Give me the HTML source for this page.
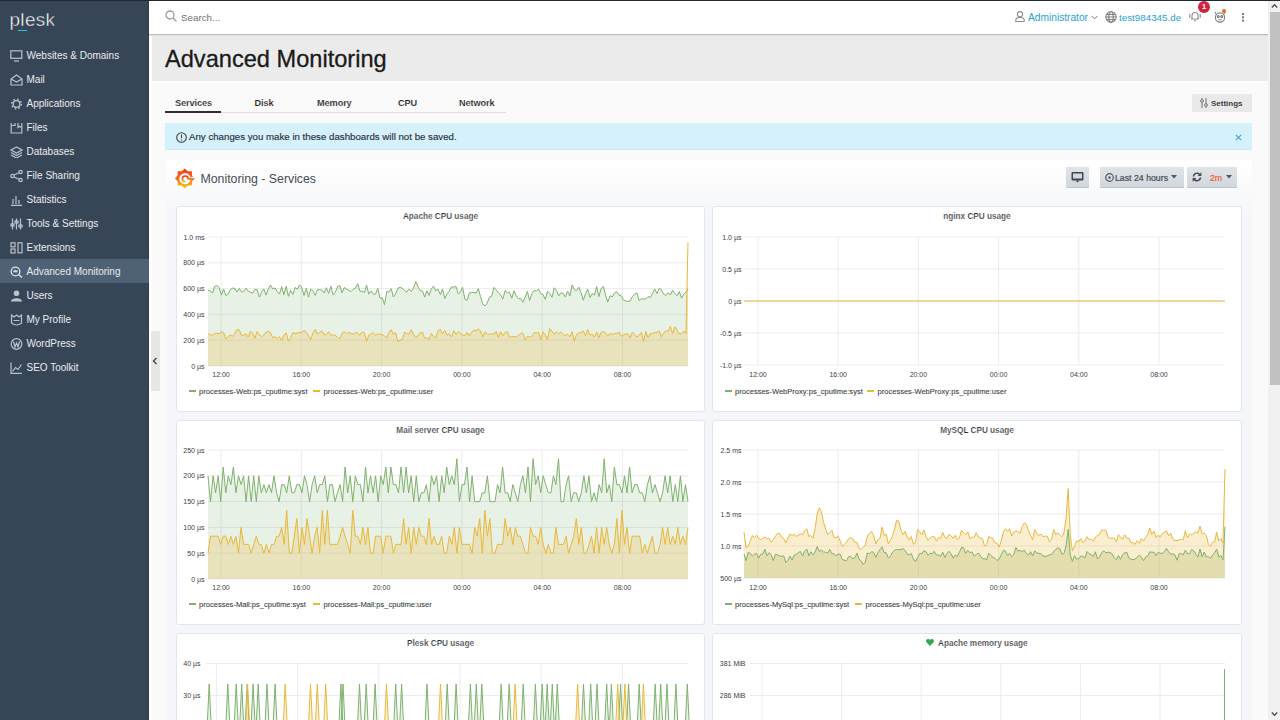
<!DOCTYPE html>
<html><head><meta charset="utf-8">
<style>
*{box-sizing:border-box;margin:0;padding:0}
html,body{width:1280px;height:720px;overflow:hidden;background:#fafafa;font-family:"Liberation Sans",sans-serif}
.a{position:absolute}
#topline{left:0;top:0;width:1280px;height:1px;background:#222831}
#side{left:0;top:1px;width:149px;height:719px;background:#374656;border-right:1px solid #2e3b49}
#logo{left:9.5px;top:8.5px;font-size:19px;color:#fff;letter-spacing:0.3px;-webkit-text-stroke:0.45px #374656}
#logo-u{left:18px;top:30px;width:9px;height:1.2px;background:#28c4d6}
.nav{position:absolute;left:0;width:149px;height:24px;color:#e9ecef;font-size:10px}
.nav span{position:absolute;left:26.5px;top:7px;white-space:nowrap}
.nav svg{position:absolute;left:10px;top:6.5px}
.nav.act{background:#4f6175}
#hdr{left:149px;top:1px;width:1119px;height:34px;background:#fff;border-bottom:1px solid #bdbdbd}
#hdrsh{left:149px;top:35px;width:1119px;height:1px;background:#e0e0e0}
#search{left:181px;top:12px;font-size:9.8px;color:#737373}
#titleband{left:151px;top:35px;width:1117px;height:48px;background:#ebebeb;border-bottom:2px solid #fdfdfd}
#title{left:165px;top:46px;font-size:23.6px;color:#1a1a1a;white-space:nowrap;-webkit-text-stroke:0.3px #1a1a1a}
.tab{position:absolute;top:97.5px;font-size:9.2px;font-weight:bold;color:#1f1f1f;-webkit-text-stroke:0.12px #fafafa;white-space:nowrap;letter-spacing:-0.1px}
#tabline{left:165px;top:111.5px;width:341px;height:1px;background:#dedede}
#tabul{left:165px;top:111px;width:56px;height:2px;background:#303030}
#setbtn{left:1192px;top:94px;width:60px;height:18px;background:#e9e9e9}
#setbtn span{position:absolute;left:19px;top:5px;font-size:8px;font-weight:bold;color:#1e1e1e;-webkit-text-stroke:0.12px #e9e9e9}
#alert{left:165px;top:123px;width:1087px;height:27px;background:#d5f1fc;border-bottom:1px solid #cde9f3}
#alert span{position:absolute;left:24px;top:8px;font-size:9.7px;color:#2a3035;white-space:nowrap;-webkit-text-stroke:0.15px #2a3035}
#scroll{left:1268px;top:1px;width:12px;height:719px;background:#f1f1f1}
#thumb{left:1269.5px;top:12px;width:10.5px;height:373px;background:#c1c1c1}
#gf{left:166px;top:160px;width:1086px;height:560px;background:linear-gradient(#ffffff 0px,#fcfcfd 20px,#f7f8fb 42px,#f5f6fa 60px,#f5f6fa 100%)}
#gftitle{left:200.5px;top:171.5px;font-size:12.3px;color:#464c54;white-space:nowrap}
.gbtn{position:absolute;top:167px;height:21px;background:linear-gradient(#e0e4e9,#d2d7dd);border-bottom:1.5px solid #bcc2c9;border-radius:1px}
.panel{position:absolute;background:#fff;border:1px solid #e3e6ed;border-radius:3px}
.ptitle{position:absolute;font-size:8.2px;font-weight:bold;color:#2f3338;-webkit-text-stroke:0.18px #fff;white-space:nowrap;text-align:center}
.leg{position:absolute;font-size:7.55px;color:#3a3f45;white-space:nowrap;-webkit-text-stroke:0.1px #3a3f45}
.leg i{display:inline-block;width:7px;height:2px;vertical-align:middle;margin-right:3.5px;position:relative;top:-1px}
svg text.ax{font-family:"Liberation Sans",sans-serif;font-size:7px;fill:#3c4148}
#collapse{left:151px;top:331px;width:9px;height:60px;background:#e6e6e6}
</style></head><body>
<div class="a" id="topline"></div>
<div class="a" id="side"></div>
<div class="a" id="logo">plesk</div>
<div class="a" id="logo-u"></div>

<div class="nav" style="top:43px"><svg width="13" height="12" viewBox="0 0 13 12" fill="none" stroke="#b9c2cb" stroke-width="1.2"><rect x="0.8" y="0.8" width="11" height="7.5"/><line x1="4" y1="11" x2="9" y2="11"/></svg><span>Websites &amp; Domains</span></div>
<div class="nav" style="top:67px"><svg width="13" height="12" viewBox="0 0 13 12" fill="none" stroke="#b9c2cb" stroke-width="1.2"><path d="M1 5 L6.5 1 L12 5 V11 H1 Z M1 5 L6.5 8 L12 5"/></svg><span>Mail</span></div>
<div class="nav" style="top:91px"><svg width="13" height="12" viewBox="0 0 13 12" fill="none" stroke="#b9c2cb"><circle cx="6.5" cy="6" r="4.9" stroke-width="1.4" stroke-dasharray="1.6 2.25"/><circle cx="6.5" cy="6" r="3.4" stroke-width="1.4"/></svg><span>Applications</span></div>
<div class="nav" style="top:115px"><svg width="13" height="12" viewBox="0 0 13 12" fill="none" stroke="#b9c2cb" stroke-width="1.2"><path d="M1.2 1 V11 H11.8 V1 M1.2 3.5 H5 V1 M8 1 V5.5 L9.5 4.3 L11 5.5"/></svg><span>Files</span></div>
<div class="nav" style="top:139px"><svg width="13" height="12" viewBox="0 0 13 12" fill="none" stroke="#b9c2cb" stroke-width="1.2"><path d="M1 4 L6.5 1 L12 4 L6.5 7 Z M1 6.5 L6.5 9.5 L12 6.5 M1 9 L6.5 12 L12 9"/></svg><span>Databases</span></div>
<div class="nav" style="top:163px"><svg width="13" height="12" viewBox="0 0 13 12" fill="none" stroke="#b9c2cb" stroke-width="1.2"><circle cx="2.5" cy="6" r="1.7"/><circle cx="10.5" cy="2" r="1.7"/><circle cx="10.5" cy="10" r="1.7"/><path d="M4 5 L9 2.8 M4 7 L9 9.2"/></svg><span>File Sharing</span></div>
<div class="nav" style="top:187px"><svg width="13" height="12" viewBox="0 0 13 12" fill="none" stroke="#b9c2cb" stroke-width="1.2"><path d="M1 11.3 H12 M3 10 V5 M6 10 V2 M9 10 V6"/></svg><span>Statistics</span></div>
<div class="nav" style="top:211px"><svg width="13" height="12" viewBox="0 0 13 12" fill="none" stroke="#b9c2cb" stroke-width="1.2"><path d="M2.5 0.5 V11.5 M6.5 0.5 V11.5 M10.5 0.5 V11.5"/><rect x="1" y="6" width="3" height="2"/><rect x="5" y="3" width="3" height="2"/><rect x="9" y="7" width="3" height="2"/></svg><span>Tools &amp; Settings</span></div>
<div class="nav" style="top:235px"><svg width="13" height="12" viewBox="0 0 13 12" fill="none" stroke="#b9c2cb" stroke-width="1.2"><rect x="1" y="0.8" width="4" height="4"/><rect x="1" y="7" width="4" height="4"/><rect x="8" y="0.8" width="4" height="10"/></svg><span>Extensions</span></div>
<div class="nav act" style="top:259px"><svg width="13" height="12" viewBox="0 0 13 12" fill="none" stroke="#dfe5ea" stroke-width="1.3"><circle cx="5.5" cy="5.5" r="4.3"/><path d="M8.6 8.6 L12 11.6 M3.5 6 L5 4.5 L6 6 L7.5 4.5"/></svg><span>Advanced Monitoring</span></div>
<div class="nav" style="top:283px"><svg width="13" height="12" viewBox="0 0 13 12" fill="#b9c2cb"><circle cx="6.5" cy="3.3" r="2.8"/><path d="M1 11.5 C1 7 12 7 12 11.5 Z"/></svg><span>Users</span></div>
<div class="nav" style="top:307px"><svg width="13" height="12" viewBox="0 0 13 12" fill="none" stroke="#b9c2cb" stroke-width="1.2"><path d="M1.5 1 L4 3 L6.5 1 L9 3 L11.5 1 V9 Q6.5 13 1.5 9 Z M3.5 6.5 H9.5"/></svg><span>My Profile</span></div>
<div class="nav" style="top:331px"><svg width="13" height="12" viewBox="0 0 13 12" fill="none" stroke="#b9c2cb" stroke-width="1.2"><circle cx="6.5" cy="6" r="5.3"/><path d="M3.5 3.5 L5 9 L6.5 5 L8 9 L9.5 3.5"/></svg><span>WordPress</span></div>
<div class="nav" style="top:355px"><svg width="13" height="12" viewBox="0 0 13 12" fill="none" stroke="#b9c2cb" stroke-width="1.2"><path d="M1 0.5 V11.3 H12 M2.5 9.5 L5.5 5.5 L8 7.5 L11.5 2.5"/></svg><span>SEO Toolkit</span></div>

<div class="a" id="hdr"></div>
<svg class="a" style="left:165px;top:10px" width="13" height="13" viewBox="0 0 13 13" fill="none" stroke="#9a9a9a" stroke-width="1.3"><circle cx="5" cy="5" r="4"/><path d="M8 8 L11.5 11.5"/></svg>
<div class="a" id="search">Search...</div>
<svg class="a" style="left:1015px;top:11px" width="10" height="11" viewBox="0 0 10 11" fill="none" stroke="#8d8d8d" stroke-width="1.1"><circle cx="5" cy="3.2" r="2.6"/><path d="M0.8 10.5 V9 Q0.8 6.5 5 6.5 Q9.2 6.5 9.2 9 V10.5 Z"/></svg>
<div class="a" style="left:1028px;top:12px;font-size:10.2px;color:#28a0d2;white-space:nowrap">Administrator</div>
<svg class="a" style="left:1091px;top:15px" width="7" height="5" viewBox="0 0 7 5" fill="none" stroke="#777" stroke-width="1"><path d="M0.5 0.8 L3.5 3.8 L6.5 0.8"/></svg>
<svg class="a" style="left:1105px;top:11px" width="12" height="12" viewBox="0 0 12 12" fill="none" stroke="#7d7d7d" stroke-width="1.1"><circle cx="6" cy="6" r="5.2"/><ellipse cx="6" cy="6" rx="2.2" ry="5.2"/><path d="M1 6 H11 M1.8 3.5 H10.2 M1.8 8.5 H10.2"/></svg>
<div class="a" style="left:1119px;top:12px;font-size:9.8px;color:#28a0d2;white-space:nowrap">test984345.de</div>
<svg class="a" style="left:1189px;top:11px" width="12" height="11" viewBox="0 0 12 11" fill="none" stroke="#8d8d8d" stroke-width="1.1"><path d="M3 8 V5 Q3 1.5 6 1.5 Q9 1.5 9 5 V8 H2 H10 M5 9.8 H7 M1 3 Q0.5 5 1 7 M11 3 Q11.5 5 11 7"/></svg>
<div class="a" style="left:1198px;top:1px;width:12px;height:12px;border-radius:6px;background:#d02340;color:#fff;font-size:7.5px;font-weight:bold;text-align:center;line-height:12px">1</div>
<svg class="a" style="left:1214px;top:11px" width="12" height="12" viewBox="0 0 12 12" fill="none" stroke="#7d7d7d" stroke-width="1.1"><circle cx="6" cy="6.5" r="4.6"/><circle cx="4.3" cy="5.6" r="1"/><circle cx="7.7" cy="5.6" r="1"/><path d="M2 3 L1 1 M10 3 L11 1 M4.5 8.8 H7.5"/></svg>
<div class="a" style="left:1222px;top:9px;width:4px;height:4px;border-radius:2px;background:#f26322"></div>
<div class="a" style="left:1242px;top:13px;width:1.7px;height:1.7px;background:#7a7a7a;box-shadow:0 3.3px 0 #7a7a7a,0 6.6px 0 #7a7a7a"></div>

<div class="a" id="titleband"></div>
<div class="a" style="left:149px;top:35px;width:2.5px;height:685px;background:#fff"></div>
<div class="a" id="hdrsh"></div>
<div class="a" id="title">Advanced Monitoring</div>

<div class="a" id="tabline"></div>
<div class="a" id="tabul"></div>
<div class="tab" style="left:175px">Services</div>
<div class="tab" style="left:254.5px">Disk</div>
<div class="tab" style="left:317px">Memory</div>
<div class="tab" style="left:398px">CPU</div>
<div class="tab" style="left:459px">Network</div>

<div class="a" id="setbtn"><svg style="position:absolute;left:8px;top:4px" width="8" height="10" viewBox="0 0 8 10" fill="none" stroke="#777" stroke-width="1"><path d="M2 0 V10 M6 0 V10"/><circle cx="2" cy="3" r="1.4" fill="#e9e9e9"/><circle cx="6" cy="7" r="1.4" fill="#e9e9e9"/></svg><span>Settings</span></div>

<div class="a" id="alert"><svg style="position:absolute;left:11px;top:9px" width="11" height="11" viewBox="0 0 11 11" fill="none" stroke="#444" stroke-width="1.1"><circle cx="5.5" cy="5.5" r="4.8"/><path d="M5.5 2.6 V6.2 M5.5 7.4 V8.4"/></svg><span>Any changes you make in these dashboards will not be saved.</span>
<svg style="position:absolute;left:1070px;top:11px" width="7" height="7" viewBox="0 0 7 7" stroke="#3aa6d6" stroke-width="1.1"><path d="M0.8 0.8 L6.2 6.2 M6.2 0.8 L0.8 6.2"/></svg></div>

<div class="a" id="collapse"><svg style="position:absolute;left:0.5px;top:25.5px" width="6" height="8" viewBox="0 0 6 8" fill="none" stroke="#3a3a3a" stroke-width="1.2"><path d="M4.5 1 L1.5 4 L4.5 7"/></svg></div>

<div class="a" id="gf"></div>
<svg class="a" style="left:174.5px;top:167.5px" width="20" height="21" viewBox="0 0 20 21">
<defs><linearGradient id="gg" x1="0" y1="0" x2="0" y2="1"><stop offset="0" stop-color="#f2301c"/><stop offset="0.5" stop-color="#f6701a"/><stop offset="1" stop-color="#f8c812"/></linearGradient></defs>
<path fill="url(#gg)" d="M9.80,0.40 L12.78,3.19 L16.87,3.33 L17.01,7.42 L19.80,10.40 L17.01,13.38 L16.87,17.47 L12.78,17.61 L9.80,20.40 L6.82,17.61 L2.73,17.47 L2.59,13.38 L-0.20,10.40 L2.59,7.42 L2.73,3.33 L6.82,3.19 Z"/>
<circle cx="10" cy="10.7" r="5.6" fill="#fdfdfe"/>
<path fill="none" stroke="url(#gg)" stroke-width="1.7" d="M10.3 13.8 A2.9 2.9 0 1 1 13.2 10.9 L16 10.9"/>
<path fill="#fdfdfe" d="M15.2 9.6 L20 8 L20 10.2 L15.6 10.1 Z"/>
</svg>
<div class="a" id="gftitle">Monitoring - Services</div>

<div class="gbtn" style="left:1066px;width:23px"><svg style="position:absolute;left:5px;top:5px" width="13" height="11" viewBox="0 0 13 11" fill="#41464d"><rect x="0.5" y="0" width="12" height="8.5" rx="1"/><rect x="2" y="1.5" width="9" height="5" fill="#d3d8de"/><path d="M4.5 8.5 H8.5 L6.5 10.5 Z"/></svg></div>
<div class="gbtn" style="left:1100px;width:84px"><svg style="position:absolute;left:5px;top:5.5px" width="9" height="9" viewBox="0 0 9 9" fill="none" stroke="#52575e" stroke-width="1.2"><circle cx="4.5" cy="4.5" r="3.8"/><circle cx="4.5" cy="4.5" r="0.6" fill="#52575e"/></svg><span style="position:absolute;left:15px;top:5.5px;font-size:8.75px;color:#464b52;white-space:nowrap;-webkit-text-stroke:0.2px #464b52">Last 24 hours</span><svg style="position:absolute;left:71px;top:8px" width="6" height="4" viewBox="0 0 6 4" fill="#52575e"><path d="M0 0 H6 L3 3.5 Z"/></svg></div>
<div class="gbtn" style="left:1187px;width:50px"><svg style="position:absolute;left:5px;top:5px" width="10" height="10" viewBox="0 0 10 10" fill="none" stroke="#41464d" stroke-width="1.5"><path d="M1.5 4.5 A3.5 3.5 0 0 1 8 3 M8.5 5.5 A3.5 3.5 0 0 1 2 7"/><path d="M8.8 0.8 V3.5 H6.2 M1.2 9.2 V6.5 H3.8" stroke-width="1.2"/></svg><span style="position:absolute;left:23px;top:5.5px;font-size:8.75px;color:#f05a28;-webkit-text-stroke:0.15px #f05a28">2m</span><svg style="position:absolute;left:39px;top:8px" width="6" height="4" viewBox="0 0 6 4" fill="#52575e"><path d="M0 0 H6 L3 3.5 Z"/></svg></div>

<div class="panel" style="left:176px;top:206px;width:529px;height:206px"></div>
<div class="panel" style="left:712px;top:206px;width:530px;height:206px"></div>
<div class="panel" style="left:176px;top:420px;width:529px;height:205px"></div>
<div class="panel" style="left:712px;top:420px;width:530px;height:205px"></div>
<div class="panel" style="left:176px;top:633px;width:529px;height:120px"></div>
<div class="panel" style="left:712px;top:633px;width:530px;height:120px"></div>

<div class="ptitle" style="left:176px;width:529px;top:212px">Apache CPU usage</div>
<div class="ptitle" style="left:712px;width:530px;top:212px">nginx CPU usage</div>
<div class="ptitle" style="left:176px;width:529px;top:426px">Mail server CPU usage</div>
<div class="ptitle" style="left:712px;width:530px;top:426px">MySQL CPU usage</div>
<div class="ptitle" style="left:176px;width:529px;top:639px">Plesk CPU usage</div>
<svg class="a" style="left:926px;top:639px" width="8" height="7" viewBox="0 0 8 7" fill="#37a84a"><path d="M4 7 L0.6 3.4 C-0.6 2 0.3 0 2 0 C3 0 3.6 0.6 4 1.2 C4.4 0.6 5 0 6 0 C7.7 0 8.6 2 7.4 3.4 Z"/></svg><div class="ptitle" style="left:938px;top:639px;text-align:left">Apache memory usage</div>

<svg class="a" style="left:0;top:0" width="1280" height="720" viewBox="0 0 1280 720">
<line x1="208.0" y1="237.0" x2="688.0" y2="237.0" stroke="#ececec" stroke-width="1"/>
<line x1="208.0" y1="262.8" x2="688.0" y2="262.8" stroke="#ececec" stroke-width="1"/>
<line x1="208.0" y1="288.6" x2="688.0" y2="288.6" stroke="#ececec" stroke-width="1"/>
<line x1="208.0" y1="314.4" x2="688.0" y2="314.4" stroke="#ececec" stroke-width="1"/>
<line x1="208.0" y1="340.2" x2="688.0" y2="340.2" stroke="#ececec" stroke-width="1"/>
<line x1="208.0" y1="366.0" x2="688.0" y2="366.0" stroke="#ececec" stroke-width="1"/>
<line x1="221.0" y1="237.0" x2="221.0" y2="366.0" stroke="#ececec" stroke-width="1"/>
<line x1="301.3" y1="237.0" x2="301.3" y2="366.0" stroke="#ececec" stroke-width="1"/>
<line x1="381.6" y1="237.0" x2="381.6" y2="366.0" stroke="#ececec" stroke-width="1"/>
<line x1="461.9" y1="237.0" x2="461.9" y2="366.0" stroke="#ececec" stroke-width="1"/>
<line x1="542.2" y1="237.0" x2="542.2" y2="366.0" stroke="#ececec" stroke-width="1"/>
<line x1="622.5" y1="237.0" x2="622.5" y2="366.0" stroke="#ececec" stroke-width="1"/>
<text x="204.5" y="239.5" text-anchor="end" class="ax">1.0 ms</text>
<text x="204.5" y="265.3" text-anchor="end" class="ax">800 µs</text>
<text x="204.5" y="291.1" text-anchor="end" class="ax">600 µs</text>
<text x="204.5" y="316.9" text-anchor="end" class="ax">400 µs</text>
<text x="204.5" y="342.7" text-anchor="end" class="ax">200 µs</text>
<text x="204.5" y="368.5" text-anchor="end" class="ax">0 µs</text>
<text x="221.0" y="377.0" text-anchor="middle" class="ax">12:00</text>
<text x="301.3" y="377.0" text-anchor="middle" class="ax">16:00</text>
<text x="381.6" y="377.0" text-anchor="middle" class="ax">20:00</text>
<text x="461.9" y="377.0" text-anchor="middle" class="ax">00:00</text>
<text x="542.2" y="377.0" text-anchor="middle" class="ax">04:00</text>
<text x="622.5" y="377.0" text-anchor="middle" class="ax">08:00</text>
<path d="M208.0,290.5 L210.2,290.6 L212.5,293.1 L214.7,286.5 L216.9,285.5 L219.2,287.5 L221.4,295.1 L223.6,289.1 L225.9,295.6 L228.1,294.1 L230.3,289.7 L232.6,288.0 L234.8,288.5 L237.0,292.0 L239.3,288.4 L241.5,291.8 L243.7,291.6 L246.0,288.2 L248.2,291.2 L250.4,292.1 L252.7,293.3 L254.9,289.3 L257.1,289.8 L259.4,297.1 L261.6,292.0 L263.8,288.9 L266.1,295.1 L268.3,288.9 L270.5,285.0 L272.8,288.9 L275.0,287.9 L277.2,291.5 L279.5,294.0 L281.7,286.7 L283.9,294.8 L286.2,286.3 L288.4,296.3 L290.6,290.4 L292.9,294.4 L295.1,287.5 L297.3,289.1 L299.6,284.8 L301.8,287.7 L304.0,295.5 L306.3,288.3 L308.5,297.1 L310.7,289.1 L313.0,291.1 L315.2,295.4 L317.4,289.8 L319.7,289.5 L321.9,290.2 L324.1,293.0 L326.4,287.7 L328.6,293.4 L330.9,286.3 L333.1,294.9 L335.3,292.3 L337.6,286.4 L339.8,285.7 L342.0,292.7 L344.3,287.5 L346.5,289.2 L348.7,290.2 L351.0,291.6 L353.2,289.3 L355.4,288.2 L357.7,283.6 L359.9,291.2 L362.1,291.3 L364.4,292.5 L366.6,285.2 L368.8,294.2 L371.1,291.0 L373.3,294.3 L375.5,294.1 L377.8,288.3 L380.0,298.1 L382.2,297.8 L384.5,304.6 L386.7,291.5 L388.9,292.0 L391.2,288.7 L393.4,297.0 L395.6,293.9 L397.9,288.3 L400.1,287.2 L402.3,288.4 L404.6,290.5 L406.8,292.0 L409.0,289.1 L411.3,291.6 L413.5,288.1 L415.7,281.6 L418.0,286.6 L420.2,290.4 L422.4,290.9 L424.7,297.1 L426.9,290.9 L429.1,295.4 L431.4,288.3 L433.6,286.2 L435.8,290.9 L438.1,289.2 L440.3,294.6 L442.5,289.2 L444.8,298.5 L447.0,293.8 L449.2,291.2 L451.5,286.8 L453.7,287.2 L455.9,286.2 L458.2,293.7 L460.4,292.2 L462.6,287.4 L464.9,299.4 L467.1,300.3 L469.3,292.9 L471.6,292.6 L473.8,292.3 L476.0,293.1 L478.3,288.6 L480.5,296.6 L482.7,303.8 L485.0,306.0 L487.2,303.0 L489.4,297.2 L491.7,296.3 L493.9,287.4 L496.1,289.8 L498.4,292.9 L500.6,294.7 L502.8,298.9 L505.1,290.5 L507.3,292.4 L509.5,292.2 L511.8,298.2 L514.0,290.8 L516.2,295.7 L518.5,298.8 L520.7,298.3 L522.9,302.3 L525.2,297.1 L527.4,291.4 L529.6,300.5 L531.9,293.6 L534.1,290.6 L536.3,290.8 L538.6,289.3 L540.8,293.7 L543.0,294.5 L545.3,299.4 L547.5,291.5 L549.7,293.4 L552.0,297.3 L554.2,287.8 L556.4,290.3 L558.7,295.9 L560.9,292.9 L563.1,293.5 L565.4,297.0 L567.6,291.1 L569.9,296.0 L572.1,284.8 L574.3,289.6 L576.6,290.6 L578.8,287.2 L581.0,292.6 L583.3,300.2 L585.5,293.9 L587.7,289.1 L590.0,297.7 L592.2,293.5 L594.4,295.1 L596.7,286.7 L598.9,296.6 L601.1,288.5 L603.4,286.5 L605.6,295.5 L607.8,301.8 L610.1,295.7 L612.3,296.9 L614.5,293.0 L616.8,291.7 L619.0,295.2 L621.2,295.7 L623.5,300.0 L625.7,301.0 L627.9,301.4 L630.2,300.7 L632.4,296.6 L634.6,294.1 L636.9,292.9 L639.1,300.6 L641.3,298.8 L643.6,299.0 L645.8,298.9 L648.0,296.6 L650.3,297.5 L652.5,293.3 L654.7,289.0 L657.0,293.5 L659.2,288.5 L661.4,289.7 L663.7,294.1 L665.9,295.5 L668.1,292.7 L670.4,295.0 L672.6,290.4 L674.8,293.5 L677.1,295.6 L679.3,291.5 L681.5,298.1 L683.8,294.2 L686.0,291.9 L688.0,288.6 L688.0,366.0 L208.0,366.0 Z" fill="rgba(126,178,109,0.18)" stroke="none"/>
<path d="M208.0,332.9 L210.2,335.0 L212.5,335.1 L214.7,333.3 L216.9,333.5 L219.2,333.7 L221.4,331.8 L223.6,332.5 L225.9,339.0 L228.1,336.6 L230.3,335.0 L232.6,336.3 L234.8,333.7 L237.0,329.4 L239.3,330.0 L241.5,335.6 L243.7,334.9 L246.0,333.8 L248.2,337.0 L250.4,331.4 L252.7,333.1 L254.9,338.4 L257.1,331.5 L259.4,334.7 L261.6,336.8 L263.8,335.0 L266.1,332.2 L268.3,331.3 L270.5,332.7 L272.8,337.8 L275.0,336.8 L277.2,338.5 L279.5,336.7 L281.7,340.6 L283.9,335.0 L286.2,332.9 L288.4,341.2 L290.6,337.9 L292.9,332.3 L295.1,333.5 L297.3,333.0 L299.6,332.4 L301.8,332.4 L304.0,330.4 L306.3,332.1 L308.5,335.7 L310.7,339.8 L313.0,332.6 L315.2,329.5 L317.4,333.8 L319.7,332.4 L321.9,330.8 L324.1,334.8 L326.4,334.4 L328.6,331.7 L330.9,335.1 L333.1,334.9 L335.3,335.3 L337.6,337.5 L339.8,338.6 L342.0,333.4 L344.3,331.8 L346.5,333.5 L348.7,332.6 L351.0,333.2 L353.2,334.2 L355.4,332.7 L357.7,333.1 L359.9,335.2 L362.1,331.9 L364.4,332.8 L366.6,341.4 L368.8,335.1 L371.1,333.9 L373.3,332.4 L375.5,335.5 L377.8,333.6 L380.0,334.5 L382.2,334.6 L384.5,335.8 L386.7,338.0 L388.9,332.4 L391.2,329.8 L393.4,334.5 L395.6,332.6 L397.9,341.7 L400.1,340.0 L402.3,339.7 L404.6,332.1 L406.8,333.4 L409.0,333.8 L411.3,329.9 L413.5,334.3 L415.7,337.6 L418.0,335.8 L420.2,332.7 L422.4,332.2 L424.7,338.2 L426.9,337.9 L429.1,339.3 L431.4,333.3 L433.6,336.8 L435.8,338.1 L438.1,330.6 L440.3,329.2 L442.5,333.9 L444.8,330.3 L447.0,335.3 L449.2,333.4 L451.5,337.1 L453.7,330.7 L455.9,334.2 L458.2,331.5 L460.4,333.5 L462.6,335.0 L464.9,335.6 L467.1,332.3 L469.3,335.7 L471.6,332.3 L473.8,330.2 L476.0,330.6 L478.3,329.1 L480.5,330.8 L482.7,336.8 L485.0,331.8 L487.2,333.9 L489.4,334.4 L491.7,333.7 L493.9,334.1 L496.1,331.5 L498.4,337.4 L500.6,331.9 L502.8,335.6 L505.1,332.4 L507.3,331.7 L509.5,337.2 L511.8,336.8 L514.0,336.5 L516.2,337.0 L518.5,335.2 L520.7,333.5 L522.9,333.3 L525.2,339.7 L527.4,336.2 L529.6,337.2 L531.9,336.3 L534.1,332.6 L536.3,333.1 L538.6,332.3 L540.8,339.9 L543.0,331.8 L545.3,335.2 L547.5,339.5 L549.7,328.5 L552.0,331.3 L554.2,334.1 L556.4,331.8 L558.7,334.1 L560.9,332.0 L563.1,334.5 L565.4,335.4 L567.6,334.3 L569.9,336.8 L572.1,331.6 L574.3,341.2 L576.6,334.4 L578.8,333.2 L581.0,332.7 L583.3,331.1 L585.5,335.7 L587.7,329.5 L590.0,335.3 L592.2,334.1 L594.4,337.1 L596.7,332.0 L598.9,337.7 L601.1,332.3 L603.4,331.7 L605.6,333.1 L607.8,336.3 L610.1,333.3 L612.3,334.5 L614.5,333.4 L616.8,333.6 L619.0,332.0 L621.2,336.3 L623.5,334.8 L625.7,334.0 L627.9,333.8 L630.2,337.9 L632.4,332.1 L634.6,334.5 L636.9,337.2 L639.1,334.8 L641.3,332.4 L643.6,341.5 L645.8,331.3 L648.0,337.7 L650.3,333.6 L652.5,333.7 L654.7,332.3 L657.0,332.3 L659.2,331.2 L661.4,336.8 L663.7,332.8 L665.9,331.0 L668.1,331.1 L670.4,326.5 L672.6,333.4 L674.8,326.8 L677.1,330.4 L679.3,333.6 L681.5,333.7 L683.8,331.0 L686.0,333.7 L688.0,242.2 L688.0,366.0 L208.0,366.0 Z" fill="rgba(234,184,57,0.24)" stroke="none"/>
<path d="M208.0,290.5 L210.2,290.6 L212.5,293.1 L214.7,286.5 L216.9,285.5 L219.2,287.5 L221.4,295.1 L223.6,289.1 L225.9,295.6 L228.1,294.1 L230.3,289.7 L232.6,288.0 L234.8,288.5 L237.0,292.0 L239.3,288.4 L241.5,291.8 L243.7,291.6 L246.0,288.2 L248.2,291.2 L250.4,292.1 L252.7,293.3 L254.9,289.3 L257.1,289.8 L259.4,297.1 L261.6,292.0 L263.8,288.9 L266.1,295.1 L268.3,288.9 L270.5,285.0 L272.8,288.9 L275.0,287.9 L277.2,291.5 L279.5,294.0 L281.7,286.7 L283.9,294.8 L286.2,286.3 L288.4,296.3 L290.6,290.4 L292.9,294.4 L295.1,287.5 L297.3,289.1 L299.6,284.8 L301.8,287.7 L304.0,295.5 L306.3,288.3 L308.5,297.1 L310.7,289.1 L313.0,291.1 L315.2,295.4 L317.4,289.8 L319.7,289.5 L321.9,290.2 L324.1,293.0 L326.4,287.7 L328.6,293.4 L330.9,286.3 L333.1,294.9 L335.3,292.3 L337.6,286.4 L339.8,285.7 L342.0,292.7 L344.3,287.5 L346.5,289.2 L348.7,290.2 L351.0,291.6 L353.2,289.3 L355.4,288.2 L357.7,283.6 L359.9,291.2 L362.1,291.3 L364.4,292.5 L366.6,285.2 L368.8,294.2 L371.1,291.0 L373.3,294.3 L375.5,294.1 L377.8,288.3 L380.0,298.1 L382.2,297.8 L384.5,304.6 L386.7,291.5 L388.9,292.0 L391.2,288.7 L393.4,297.0 L395.6,293.9 L397.9,288.3 L400.1,287.2 L402.3,288.4 L404.6,290.5 L406.8,292.0 L409.0,289.1 L411.3,291.6 L413.5,288.1 L415.7,281.6 L418.0,286.6 L420.2,290.4 L422.4,290.9 L424.7,297.1 L426.9,290.9 L429.1,295.4 L431.4,288.3 L433.6,286.2 L435.8,290.9 L438.1,289.2 L440.3,294.6 L442.5,289.2 L444.8,298.5 L447.0,293.8 L449.2,291.2 L451.5,286.8 L453.7,287.2 L455.9,286.2 L458.2,293.7 L460.4,292.2 L462.6,287.4 L464.9,299.4 L467.1,300.3 L469.3,292.9 L471.6,292.6 L473.8,292.3 L476.0,293.1 L478.3,288.6 L480.5,296.6 L482.7,303.8 L485.0,306.0 L487.2,303.0 L489.4,297.2 L491.7,296.3 L493.9,287.4 L496.1,289.8 L498.4,292.9 L500.6,294.7 L502.8,298.9 L505.1,290.5 L507.3,292.4 L509.5,292.2 L511.8,298.2 L514.0,290.8 L516.2,295.7 L518.5,298.8 L520.7,298.3 L522.9,302.3 L525.2,297.1 L527.4,291.4 L529.6,300.5 L531.9,293.6 L534.1,290.6 L536.3,290.8 L538.6,289.3 L540.8,293.7 L543.0,294.5 L545.3,299.4 L547.5,291.5 L549.7,293.4 L552.0,297.3 L554.2,287.8 L556.4,290.3 L558.7,295.9 L560.9,292.9 L563.1,293.5 L565.4,297.0 L567.6,291.1 L569.9,296.0 L572.1,284.8 L574.3,289.6 L576.6,290.6 L578.8,287.2 L581.0,292.6 L583.3,300.2 L585.5,293.9 L587.7,289.1 L590.0,297.7 L592.2,293.5 L594.4,295.1 L596.7,286.7 L598.9,296.6 L601.1,288.5 L603.4,286.5 L605.6,295.5 L607.8,301.8 L610.1,295.7 L612.3,296.9 L614.5,293.0 L616.8,291.7 L619.0,295.2 L621.2,295.7 L623.5,300.0 L625.7,301.0 L627.9,301.4 L630.2,300.7 L632.4,296.6 L634.6,294.1 L636.9,292.9 L639.1,300.6 L641.3,298.8 L643.6,299.0 L645.8,298.9 L648.0,296.6 L650.3,297.5 L652.5,293.3 L654.7,289.0 L657.0,293.5 L659.2,288.5 L661.4,289.7 L663.7,294.1 L665.9,295.5 L668.1,292.7 L670.4,295.0 L672.6,290.4 L674.8,293.5 L677.1,295.6 L679.3,291.5 L681.5,298.1 L683.8,294.2 L686.0,291.9 L688.0,288.6" fill="none" stroke="#7eb26d" stroke-width="1" stroke-linejoin="round"/>
<path d="M208.0,332.9 L210.2,335.0 L212.5,335.1 L214.7,333.3 L216.9,333.5 L219.2,333.7 L221.4,331.8 L223.6,332.5 L225.9,339.0 L228.1,336.6 L230.3,335.0 L232.6,336.3 L234.8,333.7 L237.0,329.4 L239.3,330.0 L241.5,335.6 L243.7,334.9 L246.0,333.8 L248.2,337.0 L250.4,331.4 L252.7,333.1 L254.9,338.4 L257.1,331.5 L259.4,334.7 L261.6,336.8 L263.8,335.0 L266.1,332.2 L268.3,331.3 L270.5,332.7 L272.8,337.8 L275.0,336.8 L277.2,338.5 L279.5,336.7 L281.7,340.6 L283.9,335.0 L286.2,332.9 L288.4,341.2 L290.6,337.9 L292.9,332.3 L295.1,333.5 L297.3,333.0 L299.6,332.4 L301.8,332.4 L304.0,330.4 L306.3,332.1 L308.5,335.7 L310.7,339.8 L313.0,332.6 L315.2,329.5 L317.4,333.8 L319.7,332.4 L321.9,330.8 L324.1,334.8 L326.4,334.4 L328.6,331.7 L330.9,335.1 L333.1,334.9 L335.3,335.3 L337.6,337.5 L339.8,338.6 L342.0,333.4 L344.3,331.8 L346.5,333.5 L348.7,332.6 L351.0,333.2 L353.2,334.2 L355.4,332.7 L357.7,333.1 L359.9,335.2 L362.1,331.9 L364.4,332.8 L366.6,341.4 L368.8,335.1 L371.1,333.9 L373.3,332.4 L375.5,335.5 L377.8,333.6 L380.0,334.5 L382.2,334.6 L384.5,335.8 L386.7,338.0 L388.9,332.4 L391.2,329.8 L393.4,334.5 L395.6,332.6 L397.9,341.7 L400.1,340.0 L402.3,339.7 L404.6,332.1 L406.8,333.4 L409.0,333.8 L411.3,329.9 L413.5,334.3 L415.7,337.6 L418.0,335.8 L420.2,332.7 L422.4,332.2 L424.7,338.2 L426.9,337.9 L429.1,339.3 L431.4,333.3 L433.6,336.8 L435.8,338.1 L438.1,330.6 L440.3,329.2 L442.5,333.9 L444.8,330.3 L447.0,335.3 L449.2,333.4 L451.5,337.1 L453.7,330.7 L455.9,334.2 L458.2,331.5 L460.4,333.5 L462.6,335.0 L464.9,335.6 L467.1,332.3 L469.3,335.7 L471.6,332.3 L473.8,330.2 L476.0,330.6 L478.3,329.1 L480.5,330.8 L482.7,336.8 L485.0,331.8 L487.2,333.9 L489.4,334.4 L491.7,333.7 L493.9,334.1 L496.1,331.5 L498.4,337.4 L500.6,331.9 L502.8,335.6 L505.1,332.4 L507.3,331.7 L509.5,337.2 L511.8,336.8 L514.0,336.5 L516.2,337.0 L518.5,335.2 L520.7,333.5 L522.9,333.3 L525.2,339.7 L527.4,336.2 L529.6,337.2 L531.9,336.3 L534.1,332.6 L536.3,333.1 L538.6,332.3 L540.8,339.9 L543.0,331.8 L545.3,335.2 L547.5,339.5 L549.7,328.5 L552.0,331.3 L554.2,334.1 L556.4,331.8 L558.7,334.1 L560.9,332.0 L563.1,334.5 L565.4,335.4 L567.6,334.3 L569.9,336.8 L572.1,331.6 L574.3,341.2 L576.6,334.4 L578.8,333.2 L581.0,332.7 L583.3,331.1 L585.5,335.7 L587.7,329.5 L590.0,335.3 L592.2,334.1 L594.4,337.1 L596.7,332.0 L598.9,337.7 L601.1,332.3 L603.4,331.7 L605.6,333.1 L607.8,336.3 L610.1,333.3 L612.3,334.5 L614.5,333.4 L616.8,333.6 L619.0,332.0 L621.2,336.3 L623.5,334.8 L625.7,334.0 L627.9,333.8 L630.2,337.9 L632.4,332.1 L634.6,334.5 L636.9,337.2 L639.1,334.8 L641.3,332.4 L643.6,341.5 L645.8,331.3 L648.0,337.7 L650.3,333.6 L652.5,333.7 L654.7,332.3 L657.0,332.3 L659.2,331.2 L661.4,336.8 L663.7,332.8 L665.9,331.0 L668.1,331.1 L670.4,326.5 L672.6,333.4 L674.8,326.8 L677.1,330.4 L679.3,333.6 L681.5,333.7 L683.8,331.0 L686.0,333.7 L688.0,242.2" fill="none" stroke="#eab839" stroke-width="1" stroke-linejoin="round"/>
<line x1="744.0" y1="237.0" x2="1225.0" y2="237.0" stroke="#ececec" stroke-width="1"/>
<line x1="744.0" y1="269.0" x2="1225.0" y2="269.0" stroke="#ececec" stroke-width="1"/>
<line x1="744.0" y1="301.0" x2="1225.0" y2="301.0" stroke="#ececec" stroke-width="1"/>
<line x1="744.0" y1="333.0" x2="1225.0" y2="333.0" stroke="#ececec" stroke-width="1"/>
<line x1="744.0" y1="365.0" x2="1225.0" y2="365.0" stroke="#ececec" stroke-width="1"/>
<line x1="758.0" y1="237.0" x2="758.0" y2="365.0" stroke="#ececec" stroke-width="1"/>
<line x1="838.2" y1="237.0" x2="838.2" y2="365.0" stroke="#ececec" stroke-width="1"/>
<line x1="918.4" y1="237.0" x2="918.4" y2="365.0" stroke="#ececec" stroke-width="1"/>
<line x1="998.6" y1="237.0" x2="998.6" y2="365.0" stroke="#ececec" stroke-width="1"/>
<line x1="1078.8" y1="237.0" x2="1078.8" y2="365.0" stroke="#ececec" stroke-width="1"/>
<line x1="1159.0" y1="237.0" x2="1159.0" y2="365.0" stroke="#ececec" stroke-width="1"/>
<text x="741.5" y="239.5" text-anchor="end" class="ax">1.0 µs</text>
<text x="741.5" y="271.5" text-anchor="end" class="ax">0.5 µs</text>
<text x="741.5" y="303.5" text-anchor="end" class="ax">0 µs</text>
<text x="741.5" y="335.5" text-anchor="end" class="ax">-0.5 µs</text>
<text x="741.5" y="367.5" text-anchor="end" class="ax">-1.0 µs</text>
<text x="758.0" y="377.0" text-anchor="middle" class="ax">12:00</text>
<text x="838.2" y="377.0" text-anchor="middle" class="ax">16:00</text>
<text x="918.4" y="377.0" text-anchor="middle" class="ax">20:00</text>
<text x="998.6" y="377.0" text-anchor="middle" class="ax">00:00</text>
<text x="1078.8" y="377.0" text-anchor="middle" class="ax">04:00</text>
<text x="1159.0" y="377.0" text-anchor="middle" class="ax">08:00</text>
<line x1="744" y1="301" x2="1225" y2="301" stroke="#eab839" stroke-width="1.2"/>
<line x1="208.0" y1="450.0" x2="688.0" y2="450.0" stroke="#ececec" stroke-width="1"/>
<line x1="208.0" y1="475.8" x2="688.0" y2="475.8" stroke="#ececec" stroke-width="1"/>
<line x1="208.0" y1="501.6" x2="688.0" y2="501.6" stroke="#ececec" stroke-width="1"/>
<line x1="208.0" y1="527.4" x2="688.0" y2="527.4" stroke="#ececec" stroke-width="1"/>
<line x1="208.0" y1="553.2" x2="688.0" y2="553.2" stroke="#ececec" stroke-width="1"/>
<line x1="208.0" y1="579.0" x2="688.0" y2="579.0" stroke="#ececec" stroke-width="1"/>
<line x1="221.0" y1="450.0" x2="221.0" y2="579.0" stroke="#ececec" stroke-width="1"/>
<line x1="301.3" y1="450.0" x2="301.3" y2="579.0" stroke="#ececec" stroke-width="1"/>
<line x1="381.6" y1="450.0" x2="381.6" y2="579.0" stroke="#ececec" stroke-width="1"/>
<line x1="461.9" y1="450.0" x2="461.9" y2="579.0" stroke="#ececec" stroke-width="1"/>
<line x1="542.2" y1="450.0" x2="542.2" y2="579.0" stroke="#ececec" stroke-width="1"/>
<line x1="622.5" y1="450.0" x2="622.5" y2="579.0" stroke="#ececec" stroke-width="1"/>
<text x="204.5" y="452.5" text-anchor="end" class="ax">250 µs</text>
<text x="204.5" y="478.3" text-anchor="end" class="ax">200 µs</text>
<text x="204.5" y="504.1" text-anchor="end" class="ax">150 µs</text>
<text x="204.5" y="529.9" text-anchor="end" class="ax">100 µs</text>
<text x="204.5" y="555.7" text-anchor="end" class="ax">50 µs</text>
<text x="204.5" y="581.5" text-anchor="end" class="ax">0 µs</text>
<text x="221.0" y="590.0" text-anchor="middle" class="ax">12:00</text>
<text x="301.3" y="590.0" text-anchor="middle" class="ax">16:00</text>
<text x="381.6" y="590.0" text-anchor="middle" class="ax">20:00</text>
<text x="461.9" y="590.0" text-anchor="middle" class="ax">00:00</text>
<text x="542.2" y="590.0" text-anchor="middle" class="ax">04:00</text>
<text x="622.5" y="590.0" text-anchor="middle" class="ax">08:00</text>
<path d="M208.0,475.8 L210.5,501.6 L213.1,475.8 L215.6,492.8 L218.2,475.8 L220.7,501.6 L223.2,467.0 L225.8,492.8 L228.3,475.8 L230.9,484.6 L233.4,467.0 L235.9,492.8 L238.5,475.8 L241.0,484.6 L243.6,475.8 L246.1,501.6 L248.6,475.8 L251.2,501.6 L253.7,475.8 L256.3,501.6 L258.8,475.8 L261.3,492.8 L263.9,484.6 L266.4,492.8 L269.0,484.6 L271.5,492.8 L274.0,475.8 L276.6,492.8 L279.1,501.6 L281.7,484.6 L284.2,484.6 L286.7,492.8 L289.3,475.8 L291.8,492.8 L294.3,492.8 L296.9,484.6 L299.4,484.6 L302.0,492.8 L304.5,475.8 L307.0,484.6 L309.6,501.6 L312.1,484.6 L314.7,475.8 L317.2,492.8 L319.7,484.6 L322.3,484.6 L324.8,475.8 L327.4,501.6 L329.9,484.6 L332.4,484.6 L335.0,501.6 L337.5,492.8 L340.1,484.6 L342.6,501.6 L345.1,467.0 L347.7,492.8 L350.2,475.8 L352.8,501.6 L355.3,475.8 L357.8,484.6 L360.4,484.6 L362.9,501.6 L365.5,467.0 L368.0,492.8 L370.5,475.8 L373.1,492.8 L375.6,475.8 L378.2,501.6 L380.7,475.8 L383.2,484.6 L385.8,467.0 L388.3,492.8 L390.9,467.0 L393.4,484.6 L395.9,484.6 L398.5,492.8 L401.0,467.0 L403.6,492.8 L406.1,467.0 L408.6,492.8 L411.2,475.8 L413.7,501.6 L416.3,475.8 L418.8,501.6 L421.3,492.8 L423.9,492.8 L426.4,484.6 L429.0,501.6 L431.5,475.8 L434.0,484.6 L436.6,475.8 L439.1,501.6 L441.7,475.8 L444.2,492.8 L446.7,467.0 L449.3,484.6 L451.8,475.8 L454.3,484.6 L456.9,458.8 L459.4,501.6 L462.0,484.6 L464.5,484.6 L467.0,467.0 L469.6,501.6 L472.1,475.8 L474.7,501.6 L477.2,501.6 L479.7,501.6 L482.3,492.8 L484.8,492.8 L487.4,475.8 L489.9,501.6 L492.4,501.6 L495.0,501.6 L497.5,484.6 L500.1,492.8 L502.6,467.0 L505.1,492.8 L507.7,492.8 L510.2,501.6 L512.8,484.6 L515.3,492.8 L517.8,501.6 L520.4,484.6 L522.9,475.8 L525.5,492.8 L528.0,467.0 L530.5,501.6 L533.1,458.8 L535.6,484.6 L538.2,475.8 L540.7,492.8 L543.2,475.8 L545.8,484.6 L548.3,492.8 L550.9,492.8 L553.4,475.8 L555.9,484.6 L558.5,458.8 L561.0,501.6 L563.6,501.6 L566.1,484.6 L568.6,475.8 L571.2,501.6 L573.7,492.8 L576.3,492.8 L578.8,501.6 L581.3,492.8 L583.9,475.8 L586.4,492.8 L589.0,475.8 L591.5,501.6 L594.0,492.8 L596.6,501.6 L599.1,484.6 L601.7,492.8 L604.2,458.8 L606.7,492.8 L609.3,484.6 L611.8,501.6 L614.3,467.0 L616.9,484.6 L619.4,484.6 L622.0,492.8 L624.5,475.8 L627.0,492.8 L629.6,467.0 L632.1,492.8 L634.7,484.6 L637.2,484.6 L639.7,492.8 L642.3,492.8 L644.8,501.6 L647.4,484.6 L649.9,475.8 L652.4,492.8 L655.0,484.6 L657.5,492.8 L660.1,501.6 L662.6,492.8 L665.1,475.8 L667.7,492.8 L670.2,475.8 L672.8,501.6 L675.3,484.6 L677.8,501.6 L680.4,475.8 L682.9,501.6 L685.5,484.6 L688.0,501.6 L688.0,579.0 L208.0,579.0 Z" fill="rgba(126,178,109,0.18)" stroke="none"/>
<path d="M208.0,553.2 L210.5,536.2 L213.1,536.2 L215.6,536.2 L218.2,536.2 L220.7,544.4 L223.2,536.2 L225.8,536.2 L228.3,544.4 L230.9,536.2 L233.4,544.4 L235.9,536.2 L238.5,553.2 L241.0,527.4 L243.6,544.4 L246.1,544.4 L248.6,544.4 L251.2,553.2 L253.7,544.4 L256.3,536.2 L258.8,544.4 L261.3,544.4 L263.9,553.2 L266.4,544.4 L269.0,553.2 L271.5,544.4 L274.0,544.4 L276.6,536.2 L279.1,536.2 L281.7,527.4 L284.2,544.4 L286.7,510.4 L289.3,553.2 L291.8,553.2 L294.3,536.2 L296.9,518.6 L299.4,553.2 L302.0,527.4 L304.5,544.4 L307.0,518.6 L309.6,536.2 L312.1,553.2 L314.7,536.2 L317.2,527.4 L319.7,553.2 L322.3,510.4 L324.8,544.4 L327.4,510.4 L329.9,544.4 L332.4,544.4 L335.0,544.4 L337.5,544.4 L340.1,536.2 L342.6,527.4 L345.1,536.2 L347.7,544.4 L350.2,553.2 L352.8,510.4 L355.3,536.2 L357.8,536.2 L360.4,544.4 L362.9,527.4 L365.5,544.4 L368.0,527.4 L370.5,553.2 L373.1,553.2 L375.6,536.2 L378.2,536.2 L380.7,536.2 L383.2,553.2 L385.8,536.2 L388.3,536.2 L390.9,536.2 L393.4,553.2 L395.9,544.4 L398.5,544.4 L401.0,544.4 L403.6,518.6 L406.1,544.4 L408.6,527.4 L411.2,553.2 L413.7,527.4 L416.3,544.4 L418.8,527.4 L421.3,536.2 L423.9,536.2 L426.4,544.4 L429.0,518.6 L431.5,544.4 L434.0,536.2 L436.6,544.4 L439.1,544.4 L441.7,536.2 L444.2,553.2 L446.7,553.2 L449.3,536.2 L451.8,544.4 L454.3,527.4 L456.9,553.2 L459.4,527.4 L462.0,544.4 L464.5,544.4 L467.0,544.4 L469.6,544.4 L472.1,553.2 L474.7,527.4 L477.2,536.2 L479.7,518.6 L482.3,553.2 L484.8,510.4 L487.4,536.2 L489.9,518.6 L492.4,553.2 L495.0,553.2 L497.5,544.4 L500.1,544.4 L502.6,544.4 L505.1,518.6 L507.7,536.2 L510.2,527.4 L512.8,544.4 L515.3,527.4 L517.8,536.2 L520.4,536.2 L522.9,544.4 L525.5,553.2 L528.0,553.2 L530.5,527.4 L533.1,536.2 L535.6,536.2 L538.2,544.4 L540.7,527.4 L543.2,544.4 L545.8,553.2 L548.3,544.4 L550.9,553.2 L553.4,553.2 L555.9,527.4 L558.5,544.4 L561.0,544.4 L563.6,544.4 L566.1,536.2 L568.6,553.2 L571.2,544.4 L573.7,536.2 L576.3,518.6 L578.8,544.4 L581.3,527.4 L583.9,553.2 L586.4,553.2 L589.0,544.4 L591.5,536.2 L594.0,553.2 L596.6,527.4 L599.1,553.2 L601.7,527.4 L604.2,544.4 L606.7,527.4 L609.3,544.4 L611.8,553.2 L614.3,544.4 L616.9,518.6 L619.4,553.2 L622.0,510.4 L624.5,544.4 L627.0,527.4 L629.6,553.2 L632.1,536.2 L634.7,536.2 L637.2,536.2 L639.7,536.2 L642.3,553.2 L644.8,544.4 L647.4,553.2 L649.9,544.4 L652.4,536.2 L655.0,553.2 L657.5,553.2 L660.1,544.4 L662.6,527.4 L665.1,544.4 L667.7,527.4 L670.2,544.4 L672.8,536.2 L675.3,544.4 L677.8,527.4 L680.4,544.4 L682.9,536.2 L685.5,544.4 L688.0,527.4 L688.0,579.0 L208.0,579.0 Z" fill="rgba(234,184,57,0.24)" stroke="none"/>
<path d="M208.0,475.8 L210.5,501.6 L213.1,475.8 L215.6,492.8 L218.2,475.8 L220.7,501.6 L223.2,467.0 L225.8,492.8 L228.3,475.8 L230.9,484.6 L233.4,467.0 L235.9,492.8 L238.5,475.8 L241.0,484.6 L243.6,475.8 L246.1,501.6 L248.6,475.8 L251.2,501.6 L253.7,475.8 L256.3,501.6 L258.8,475.8 L261.3,492.8 L263.9,484.6 L266.4,492.8 L269.0,484.6 L271.5,492.8 L274.0,475.8 L276.6,492.8 L279.1,501.6 L281.7,484.6 L284.2,484.6 L286.7,492.8 L289.3,475.8 L291.8,492.8 L294.3,492.8 L296.9,484.6 L299.4,484.6 L302.0,492.8 L304.5,475.8 L307.0,484.6 L309.6,501.6 L312.1,484.6 L314.7,475.8 L317.2,492.8 L319.7,484.6 L322.3,484.6 L324.8,475.8 L327.4,501.6 L329.9,484.6 L332.4,484.6 L335.0,501.6 L337.5,492.8 L340.1,484.6 L342.6,501.6 L345.1,467.0 L347.7,492.8 L350.2,475.8 L352.8,501.6 L355.3,475.8 L357.8,484.6 L360.4,484.6 L362.9,501.6 L365.5,467.0 L368.0,492.8 L370.5,475.8 L373.1,492.8 L375.6,475.8 L378.2,501.6 L380.7,475.8 L383.2,484.6 L385.8,467.0 L388.3,492.8 L390.9,467.0 L393.4,484.6 L395.9,484.6 L398.5,492.8 L401.0,467.0 L403.6,492.8 L406.1,467.0 L408.6,492.8 L411.2,475.8 L413.7,501.6 L416.3,475.8 L418.8,501.6 L421.3,492.8 L423.9,492.8 L426.4,484.6 L429.0,501.6 L431.5,475.8 L434.0,484.6 L436.6,475.8 L439.1,501.6 L441.7,475.8 L444.2,492.8 L446.7,467.0 L449.3,484.6 L451.8,475.8 L454.3,484.6 L456.9,458.8 L459.4,501.6 L462.0,484.6 L464.5,484.6 L467.0,467.0 L469.6,501.6 L472.1,475.8 L474.7,501.6 L477.2,501.6 L479.7,501.6 L482.3,492.8 L484.8,492.8 L487.4,475.8 L489.9,501.6 L492.4,501.6 L495.0,501.6 L497.5,484.6 L500.1,492.8 L502.6,467.0 L505.1,492.8 L507.7,492.8 L510.2,501.6 L512.8,484.6 L515.3,492.8 L517.8,501.6 L520.4,484.6 L522.9,475.8 L525.5,492.8 L528.0,467.0 L530.5,501.6 L533.1,458.8 L535.6,484.6 L538.2,475.8 L540.7,492.8 L543.2,475.8 L545.8,484.6 L548.3,492.8 L550.9,492.8 L553.4,475.8 L555.9,484.6 L558.5,458.8 L561.0,501.6 L563.6,501.6 L566.1,484.6 L568.6,475.8 L571.2,501.6 L573.7,492.8 L576.3,492.8 L578.8,501.6 L581.3,492.8 L583.9,475.8 L586.4,492.8 L589.0,475.8 L591.5,501.6 L594.0,492.8 L596.6,501.6 L599.1,484.6 L601.7,492.8 L604.2,458.8 L606.7,492.8 L609.3,484.6 L611.8,501.6 L614.3,467.0 L616.9,484.6 L619.4,484.6 L622.0,492.8 L624.5,475.8 L627.0,492.8 L629.6,467.0 L632.1,492.8 L634.7,484.6 L637.2,484.6 L639.7,492.8 L642.3,492.8 L644.8,501.6 L647.4,484.6 L649.9,475.8 L652.4,492.8 L655.0,484.6 L657.5,492.8 L660.1,501.6 L662.6,492.8 L665.1,475.8 L667.7,492.8 L670.2,475.8 L672.8,501.6 L675.3,484.6 L677.8,501.6 L680.4,475.8 L682.9,501.6 L685.5,484.6 L688.0,501.6" fill="none" stroke="#7eb26d" stroke-width="1" stroke-linejoin="round"/>
<path d="M208.0,553.2 L210.5,536.2 L213.1,536.2 L215.6,536.2 L218.2,536.2 L220.7,544.4 L223.2,536.2 L225.8,536.2 L228.3,544.4 L230.9,536.2 L233.4,544.4 L235.9,536.2 L238.5,553.2 L241.0,527.4 L243.6,544.4 L246.1,544.4 L248.6,544.4 L251.2,553.2 L253.7,544.4 L256.3,536.2 L258.8,544.4 L261.3,544.4 L263.9,553.2 L266.4,544.4 L269.0,553.2 L271.5,544.4 L274.0,544.4 L276.6,536.2 L279.1,536.2 L281.7,527.4 L284.2,544.4 L286.7,510.4 L289.3,553.2 L291.8,553.2 L294.3,536.2 L296.9,518.6 L299.4,553.2 L302.0,527.4 L304.5,544.4 L307.0,518.6 L309.6,536.2 L312.1,553.2 L314.7,536.2 L317.2,527.4 L319.7,553.2 L322.3,510.4 L324.8,544.4 L327.4,510.4 L329.9,544.4 L332.4,544.4 L335.0,544.4 L337.5,544.4 L340.1,536.2 L342.6,527.4 L345.1,536.2 L347.7,544.4 L350.2,553.2 L352.8,510.4 L355.3,536.2 L357.8,536.2 L360.4,544.4 L362.9,527.4 L365.5,544.4 L368.0,527.4 L370.5,553.2 L373.1,553.2 L375.6,536.2 L378.2,536.2 L380.7,536.2 L383.2,553.2 L385.8,536.2 L388.3,536.2 L390.9,536.2 L393.4,553.2 L395.9,544.4 L398.5,544.4 L401.0,544.4 L403.6,518.6 L406.1,544.4 L408.6,527.4 L411.2,553.2 L413.7,527.4 L416.3,544.4 L418.8,527.4 L421.3,536.2 L423.9,536.2 L426.4,544.4 L429.0,518.6 L431.5,544.4 L434.0,536.2 L436.6,544.4 L439.1,544.4 L441.7,536.2 L444.2,553.2 L446.7,553.2 L449.3,536.2 L451.8,544.4 L454.3,527.4 L456.9,553.2 L459.4,527.4 L462.0,544.4 L464.5,544.4 L467.0,544.4 L469.6,544.4 L472.1,553.2 L474.7,527.4 L477.2,536.2 L479.7,518.6 L482.3,553.2 L484.8,510.4 L487.4,536.2 L489.9,518.6 L492.4,553.2 L495.0,553.2 L497.5,544.4 L500.1,544.4 L502.6,544.4 L505.1,518.6 L507.7,536.2 L510.2,527.4 L512.8,544.4 L515.3,527.4 L517.8,536.2 L520.4,536.2 L522.9,544.4 L525.5,553.2 L528.0,553.2 L530.5,527.4 L533.1,536.2 L535.6,536.2 L538.2,544.4 L540.7,527.4 L543.2,544.4 L545.8,553.2 L548.3,544.4 L550.9,553.2 L553.4,553.2 L555.9,527.4 L558.5,544.4 L561.0,544.4 L563.6,544.4 L566.1,536.2 L568.6,553.2 L571.2,544.4 L573.7,536.2 L576.3,518.6 L578.8,544.4 L581.3,527.4 L583.9,553.2 L586.4,553.2 L589.0,544.4 L591.5,536.2 L594.0,553.2 L596.6,527.4 L599.1,553.2 L601.7,527.4 L604.2,544.4 L606.7,527.4 L609.3,544.4 L611.8,553.2 L614.3,544.4 L616.9,518.6 L619.4,553.2 L622.0,510.4 L624.5,544.4 L627.0,527.4 L629.6,553.2 L632.1,536.2 L634.7,536.2 L637.2,536.2 L639.7,536.2 L642.3,553.2 L644.8,544.4 L647.4,553.2 L649.9,544.4 L652.4,536.2 L655.0,553.2 L657.5,553.2 L660.1,544.4 L662.6,527.4 L665.1,544.4 L667.7,527.4 L670.2,544.4 L672.8,536.2 L675.3,544.4 L677.8,527.4 L680.4,544.4 L682.9,536.2 L685.5,544.4 L688.0,527.4" fill="none" stroke="#eab839" stroke-width="1" stroke-linejoin="round"/>
<line x1="744.0" y1="450.0" x2="1225.0" y2="450.0" stroke="#ececec" stroke-width="1"/>
<line x1="744.0" y1="482.0" x2="1225.0" y2="482.0" stroke="#ececec" stroke-width="1"/>
<line x1="744.0" y1="514.0" x2="1225.0" y2="514.0" stroke="#ececec" stroke-width="1"/>
<line x1="744.0" y1="546.0" x2="1225.0" y2="546.0" stroke="#ececec" stroke-width="1"/>
<line x1="744.0" y1="578.0" x2="1225.0" y2="578.0" stroke="#ececec" stroke-width="1"/>
<line x1="758.0" y1="450.0" x2="758.0" y2="578.0" stroke="#ececec" stroke-width="1"/>
<line x1="838.2" y1="450.0" x2="838.2" y2="578.0" stroke="#ececec" stroke-width="1"/>
<line x1="918.4" y1="450.0" x2="918.4" y2="578.0" stroke="#ececec" stroke-width="1"/>
<line x1="998.6" y1="450.0" x2="998.6" y2="578.0" stroke="#ececec" stroke-width="1"/>
<line x1="1078.8" y1="450.0" x2="1078.8" y2="578.0" stroke="#ececec" stroke-width="1"/>
<line x1="1159.0" y1="450.0" x2="1159.0" y2="578.0" stroke="#ececec" stroke-width="1"/>
<text x="741.5" y="452.5" text-anchor="end" class="ax">2.5 ms</text>
<text x="741.5" y="484.5" text-anchor="end" class="ax">2.0 ms</text>
<text x="741.5" y="516.5" text-anchor="end" class="ax">1.5 ms</text>
<text x="741.5" y="548.5" text-anchor="end" class="ax">1.0 ms</text>
<text x="741.5" y="580.5" text-anchor="end" class="ax">500 µs</text>
<text x="758.0" y="590.0" text-anchor="middle" class="ax">12:00</text>
<text x="838.2" y="590.0" text-anchor="middle" class="ax">16:00</text>
<text x="918.4" y="590.0" text-anchor="middle" class="ax">20:00</text>
<text x="998.6" y="590.0" text-anchor="middle" class="ax">00:00</text>
<text x="1078.8" y="590.0" text-anchor="middle" class="ax">04:00</text>
<text x="1159.0" y="590.0" text-anchor="middle" class="ax">08:00</text>
<path d="M744.0,532.2 L746.1,547.7 L748.2,545.6 L750.3,541.0 L752.4,535.7 L754.5,537.4 L756.6,535.2 L758.6,538.2 L760.7,539.6 L762.8,538.3 L764.9,536.7 L767.0,539.0 L769.1,538.1 L771.2,542.2 L773.3,539.5 L775.4,536.3 L777.5,533.5 L779.6,533.4 L781.7,537.3 L783.7,538.5 L785.8,543.0 L787.9,537.9 L790.0,534.1 L792.1,535.4 L794.2,534.4 L796.3,536.5 L798.4,535.0 L800.5,533.9 L802.6,534.7 L804.7,530.8 L806.8,528.7 L808.8,536.5 L810.9,535.5 L813.0,538.3 L815.1,528.5 L817.2,513.8 L819.3,507.8 L821.4,511.9 L823.5,522.1 L825.6,528.9 L827.7,534.5 L829.8,532.7 L831.9,530.3 L833.9,537.4 L836.0,537.5 L838.1,535.9 L840.2,541.0 L842.3,546.4 L844.4,544.5 L846.5,541.9 L848.6,538.9 L850.7,537.6 L852.8,538.8 L854.9,542.6 L857.0,542.3 L859.0,548.4 L861.1,549.2 L863.2,547.5 L865.3,544.9 L867.4,536.0 L869.5,533.2 L871.6,531.6 L873.7,535.5 L875.8,544.0 L877.9,539.7 L880.0,538.4 L882.1,527.1 L884.1,535.5 L886.2,534.2 L888.3,543.9 L890.4,540.2 L892.5,536.2 L894.6,528.9 L896.7,520.3 L898.8,521.1 L900.9,530.2 L903.0,534.5 L905.1,531.5 L907.2,537.0 L909.2,540.2 L911.3,536.6 L913.4,544.3 L915.5,542.7 L917.6,529.6 L919.7,531.6 L921.8,534.7 L923.9,530.0 L926.0,536.3 L928.1,540.3 L930.2,537.7 L932.3,536.7 L934.3,536.8 L936.4,541.2 L938.5,537.4 L940.6,538.7 L942.7,532.5 L944.8,537.2 L946.9,538.5 L949.0,534.3 L951.1,535.9 L953.2,538.3 L955.3,535.3 L957.4,539.6 L959.4,538.0 L961.5,530.3 L963.6,533.0 L965.7,534.7 L967.8,531.8 L969.9,538.8 L972.0,537.3 L974.1,537.2 L976.2,532.8 L978.3,536.7 L980.4,538.1 L982.5,538.7 L984.5,545.8 L986.6,545.0 L988.7,536.4 L990.8,537.7 L992.9,538.2 L995.0,542.9 L997.1,543.3 L999.2,547.2 L1001.3,540.3 L1003.4,532.0 L1005.5,528.8 L1007.6,531.3 L1009.6,528.7 L1011.7,535.9 L1013.8,532.1 L1015.9,531.2 L1018.0,531.4 L1020.1,533.3 L1022.2,526.7 L1024.3,522.7 L1026.4,524.4 L1028.5,530.9 L1030.6,535.7 L1032.7,539.7 L1034.7,529.4 L1036.8,533.7 L1038.9,535.4 L1041.0,534.1 L1043.1,536.9 L1045.2,536.0 L1047.3,536.3 L1049.4,541.8 L1051.5,539.8 L1053.6,529.5 L1055.7,534.6 L1057.8,532.8 L1059.8,535.1 L1061.9,536.8 L1064.0,532.6 L1066.1,517.9 L1068.2,488.6 L1070.3,535.3 L1072.4,550.9 L1074.5,546.4 L1076.6,540.7 L1078.7,541.7 L1080.8,538.6 L1082.9,542.7 L1084.9,541.0 L1087.0,536.6 L1089.1,539.5 L1091.2,539.1 L1093.3,541.2 L1095.4,537.1 L1097.5,535.3 L1099.6,534.3 L1101.7,530.0 L1103.8,530.3 L1105.9,530.4 L1108.0,537.2 L1110.0,538.1 L1112.1,538.3 L1114.2,538.0 L1116.3,541.7 L1118.4,534.8 L1120.5,536.9 L1122.6,539.3 L1124.7,534.9 L1126.8,538.2 L1128.9,538.1 L1131.0,543.0 L1133.1,542.5 L1135.1,544.3 L1137.2,540.6 L1139.3,543.3 L1141.4,538.4 L1143.5,541.0 L1145.6,537.4 L1147.7,534.5 L1149.8,528.0 L1151.9,534.4 L1154.0,531.0 L1156.1,537.7 L1158.2,535.2 L1160.2,536.8 L1162.3,533.4 L1164.4,532.1 L1166.5,530.9 L1168.6,535.9 L1170.7,533.2 L1172.8,539.1 L1174.9,540.5 L1177.0,540.7 L1179.1,539.9 L1181.2,539.3 L1183.3,539.8 L1185.3,530.7 L1187.4,538.0 L1189.5,533.8 L1191.6,534.8 L1193.7,533.3 L1195.8,531.8 L1197.9,533.1 L1200.0,526.2 L1202.1,533.6 L1204.2,533.3 L1206.3,535.3 L1208.4,544.2 L1210.4,546.1 L1212.5,542.3 L1214.6,542.1 L1216.7,532.1 L1218.8,541.1 L1220.9,538.5 L1223.0,543.0 L1225.0,469.2 L1225.0,578.0 L744.0,578.0 Z" fill="rgba(234,184,57,0.24)" stroke="none"/>
<path d="M744.0,554.0 L746.1,560.6 L748.2,552.3 L750.3,553.4 L752.4,556.1 L754.5,554.1 L756.6,553.5 L758.6,558.0 L760.7,554.4 L762.8,554.0 L764.9,549.2 L767.0,555.8 L769.1,552.7 L771.2,554.7 L773.3,560.7 L775.4,554.3 L777.5,554.8 L779.6,556.1 L781.7,556.2 L783.7,555.9 L785.8,562.6 L787.9,560.3 L790.0,556.2 L792.1,560.0 L794.2,555.2 L796.3,554.3 L798.4,552.4 L800.5,551.6 L802.6,555.9 L804.7,551.1 L806.8,549.0 L808.8,555.7 L810.9,551.8 L813.0,554.9 L815.1,552.0 L817.2,546.6 L819.3,551.5 L821.4,550.2 L823.5,551.9 L825.6,552.2 L827.7,553.2 L829.8,549.3 L831.9,553.6 L833.9,553.8 L836.0,555.7 L838.1,553.9 L840.2,554.4 L842.3,559.5 L844.4,560.3 L846.5,560.7 L848.6,556.7 L850.7,556.2 L852.8,558.9 L854.9,557.6 L857.0,553.2 L859.0,559.1 L861.1,560.9 L863.2,564.4 L865.3,562.0 L867.4,553.0 L869.5,553.8 L871.6,551.7 L873.7,552.4 L875.8,557.3 L877.9,552.6 L880.0,549.4 L882.1,546.8 L884.1,552.7 L886.2,552.8 L888.3,557.9 L890.4,556.5 L892.5,552.3 L894.6,550.1 L896.7,549.4 L898.8,549.5 L900.9,549.6 L903.0,548.5 L905.1,550.6 L907.2,554.0 L909.2,554.8 L911.3,553.5 L913.4,559.1 L915.5,561.6 L917.6,557.7 L919.7,553.5 L921.8,553.7 L923.9,550.7 L926.0,551.7 L928.1,555.4 L930.2,553.2 L932.3,553.8 L934.3,551.3 L936.4,554.9 L938.5,555.0 L940.6,556.4 L942.7,552.1 L944.8,557.4 L946.9,553.5 L949.0,551.3 L951.1,553.9 L953.2,558.2 L955.3,555.1 L957.4,556.3 L959.4,552.3 L961.5,547.3 L963.6,547.8 L965.7,553.4 L967.8,550.2 L969.9,552.7 L972.0,551.9 L974.1,556.0 L976.2,554.5 L978.3,552.9 L980.4,556.0 L982.5,558.7 L984.5,558.6 L986.6,559.7 L988.7,553.3 L990.8,555.5 L992.9,557.3 L995.0,558.4 L997.1,560.5 L999.2,558.9 L1001.3,554.6 L1003.4,550.3 L1005.5,551.2 L1007.6,555.6 L1009.6,553.3 L1011.7,556.7 L1013.8,554.7 L1015.9,547.4 L1018.0,551.1 L1020.1,550.5 L1022.2,551.5 L1024.3,550.2 L1026.4,553.4 L1028.5,555.1 L1030.6,551.7 L1032.7,556.0 L1034.7,550.9 L1036.8,552.9 L1038.9,553.4 L1041.0,553.7 L1043.1,556.1 L1045.2,556.3 L1047.3,555.8 L1049.4,554.8 L1051.5,554.5 L1053.6,551.6 L1055.7,549.5 L1057.8,547.7 L1059.8,548.7 L1061.9,554.3 L1064.0,553.5 L1066.1,545.4 L1068.2,529.4 L1070.3,555.2 L1072.4,561.3 L1074.5,555.6 L1076.6,559.0 L1078.7,558.7 L1080.8,556.0 L1082.9,556.5 L1084.9,558.1 L1087.0,551.5 L1089.1,553.6 L1091.2,554.6 L1093.3,556.3 L1095.4,551.8 L1097.5,559.0 L1099.6,556.9 L1101.7,552.6 L1103.8,550.8 L1105.9,552.9 L1108.0,552.3 L1110.0,552.3 L1112.1,553.9 L1114.2,557.7 L1116.3,559.7 L1118.4,555.6 L1120.5,559.3 L1122.6,554.7 L1124.7,552.8 L1126.8,552.3 L1128.9,558.0 L1131.0,559.3 L1133.1,559.6 L1135.1,559.1 L1137.2,557.4 L1139.3,555.0 L1141.4,557.3 L1143.5,560.6 L1145.6,557.2 L1147.7,556.1 L1149.8,551.8 L1151.9,552.3 L1154.0,552.2 L1156.1,555.6 L1158.2,552.2 L1160.2,553.2 L1162.3,553.4 L1164.4,551.6 L1166.5,548.4 L1168.6,551.7 L1170.7,554.3 L1172.8,553.7 L1174.9,554.8 L1177.0,560.2 L1179.1,553.9 L1181.2,553.5 L1183.3,554.9 L1185.3,550.2 L1187.4,553.5 L1189.5,553.8 L1191.6,549.6 L1193.7,550.7 L1195.8,554.1 L1197.9,557.1 L1200.0,549.0 L1202.1,556.9 L1204.2,552.0 L1206.3,556.8 L1208.4,556.5 L1210.4,558.5 L1212.5,555.2 L1214.6,552.6 L1216.7,549.1 L1218.8,557.2 L1220.9,555.4 L1223.0,559.7 L1225.0,526.8 L1225.0,578.0 L744.0,578.0 Z" fill="rgba(126,178,109,0.18)" stroke="none"/>
<path d="M744.0,554.0 L746.1,560.6 L748.2,552.3 L750.3,553.4 L752.4,556.1 L754.5,554.1 L756.6,553.5 L758.6,558.0 L760.7,554.4 L762.8,554.0 L764.9,549.2 L767.0,555.8 L769.1,552.7 L771.2,554.7 L773.3,560.7 L775.4,554.3 L777.5,554.8 L779.6,556.1 L781.7,556.2 L783.7,555.9 L785.8,562.6 L787.9,560.3 L790.0,556.2 L792.1,560.0 L794.2,555.2 L796.3,554.3 L798.4,552.4 L800.5,551.6 L802.6,555.9 L804.7,551.1 L806.8,549.0 L808.8,555.7 L810.9,551.8 L813.0,554.9 L815.1,552.0 L817.2,546.6 L819.3,551.5 L821.4,550.2 L823.5,551.9 L825.6,552.2 L827.7,553.2 L829.8,549.3 L831.9,553.6 L833.9,553.8 L836.0,555.7 L838.1,553.9 L840.2,554.4 L842.3,559.5 L844.4,560.3 L846.5,560.7 L848.6,556.7 L850.7,556.2 L852.8,558.9 L854.9,557.6 L857.0,553.2 L859.0,559.1 L861.1,560.9 L863.2,564.4 L865.3,562.0 L867.4,553.0 L869.5,553.8 L871.6,551.7 L873.7,552.4 L875.8,557.3 L877.9,552.6 L880.0,549.4 L882.1,546.8 L884.1,552.7 L886.2,552.8 L888.3,557.9 L890.4,556.5 L892.5,552.3 L894.6,550.1 L896.7,549.4 L898.8,549.5 L900.9,549.6 L903.0,548.5 L905.1,550.6 L907.2,554.0 L909.2,554.8 L911.3,553.5 L913.4,559.1 L915.5,561.6 L917.6,557.7 L919.7,553.5 L921.8,553.7 L923.9,550.7 L926.0,551.7 L928.1,555.4 L930.2,553.2 L932.3,553.8 L934.3,551.3 L936.4,554.9 L938.5,555.0 L940.6,556.4 L942.7,552.1 L944.8,557.4 L946.9,553.5 L949.0,551.3 L951.1,553.9 L953.2,558.2 L955.3,555.1 L957.4,556.3 L959.4,552.3 L961.5,547.3 L963.6,547.8 L965.7,553.4 L967.8,550.2 L969.9,552.7 L972.0,551.9 L974.1,556.0 L976.2,554.5 L978.3,552.9 L980.4,556.0 L982.5,558.7 L984.5,558.6 L986.6,559.7 L988.7,553.3 L990.8,555.5 L992.9,557.3 L995.0,558.4 L997.1,560.5 L999.2,558.9 L1001.3,554.6 L1003.4,550.3 L1005.5,551.2 L1007.6,555.6 L1009.6,553.3 L1011.7,556.7 L1013.8,554.7 L1015.9,547.4 L1018.0,551.1 L1020.1,550.5 L1022.2,551.5 L1024.3,550.2 L1026.4,553.4 L1028.5,555.1 L1030.6,551.7 L1032.7,556.0 L1034.7,550.9 L1036.8,552.9 L1038.9,553.4 L1041.0,553.7 L1043.1,556.1 L1045.2,556.3 L1047.3,555.8 L1049.4,554.8 L1051.5,554.5 L1053.6,551.6 L1055.7,549.5 L1057.8,547.7 L1059.8,548.7 L1061.9,554.3 L1064.0,553.5 L1066.1,545.4 L1068.2,529.4 L1070.3,555.2 L1072.4,561.3 L1074.5,555.6 L1076.6,559.0 L1078.7,558.7 L1080.8,556.0 L1082.9,556.5 L1084.9,558.1 L1087.0,551.5 L1089.1,553.6 L1091.2,554.6 L1093.3,556.3 L1095.4,551.8 L1097.5,559.0 L1099.6,556.9 L1101.7,552.6 L1103.8,550.8 L1105.9,552.9 L1108.0,552.3 L1110.0,552.3 L1112.1,553.9 L1114.2,557.7 L1116.3,559.7 L1118.4,555.6 L1120.5,559.3 L1122.6,554.7 L1124.7,552.8 L1126.8,552.3 L1128.9,558.0 L1131.0,559.3 L1133.1,559.6 L1135.1,559.1 L1137.2,557.4 L1139.3,555.0 L1141.4,557.3 L1143.5,560.6 L1145.6,557.2 L1147.7,556.1 L1149.8,551.8 L1151.9,552.3 L1154.0,552.2 L1156.1,555.6 L1158.2,552.2 L1160.2,553.2 L1162.3,553.4 L1164.4,551.6 L1166.5,548.4 L1168.6,551.7 L1170.7,554.3 L1172.8,553.7 L1174.9,554.8 L1177.0,560.2 L1179.1,553.9 L1181.2,553.5 L1183.3,554.9 L1185.3,550.2 L1187.4,553.5 L1189.5,553.8 L1191.6,549.6 L1193.7,550.7 L1195.8,554.1 L1197.9,557.1 L1200.0,549.0 L1202.1,556.9 L1204.2,552.0 L1206.3,556.8 L1208.4,556.5 L1210.4,558.5 L1212.5,555.2 L1214.6,552.6 L1216.7,549.1 L1218.8,557.2 L1220.9,555.4 L1223.0,559.7 L1225.0,526.8 L1225.0,578.0 L744.0,578.0 Z" fill="rgba(234,184,57,0.12)" stroke="none"/>
<path d="M744.0,554.0 L746.1,560.6 L748.2,552.3 L750.3,553.4 L752.4,556.1 L754.5,554.1 L756.6,553.5 L758.6,558.0 L760.7,554.4 L762.8,554.0 L764.9,549.2 L767.0,555.8 L769.1,552.7 L771.2,554.7 L773.3,560.7 L775.4,554.3 L777.5,554.8 L779.6,556.1 L781.7,556.2 L783.7,555.9 L785.8,562.6 L787.9,560.3 L790.0,556.2 L792.1,560.0 L794.2,555.2 L796.3,554.3 L798.4,552.4 L800.5,551.6 L802.6,555.9 L804.7,551.1 L806.8,549.0 L808.8,555.7 L810.9,551.8 L813.0,554.9 L815.1,552.0 L817.2,546.6 L819.3,551.5 L821.4,550.2 L823.5,551.9 L825.6,552.2 L827.7,553.2 L829.8,549.3 L831.9,553.6 L833.9,553.8 L836.0,555.7 L838.1,553.9 L840.2,554.4 L842.3,559.5 L844.4,560.3 L846.5,560.7 L848.6,556.7 L850.7,556.2 L852.8,558.9 L854.9,557.6 L857.0,553.2 L859.0,559.1 L861.1,560.9 L863.2,564.4 L865.3,562.0 L867.4,553.0 L869.5,553.8 L871.6,551.7 L873.7,552.4 L875.8,557.3 L877.9,552.6 L880.0,549.4 L882.1,546.8 L884.1,552.7 L886.2,552.8 L888.3,557.9 L890.4,556.5 L892.5,552.3 L894.6,550.1 L896.7,549.4 L898.8,549.5 L900.9,549.6 L903.0,548.5 L905.1,550.6 L907.2,554.0 L909.2,554.8 L911.3,553.5 L913.4,559.1 L915.5,561.6 L917.6,557.7 L919.7,553.5 L921.8,553.7 L923.9,550.7 L926.0,551.7 L928.1,555.4 L930.2,553.2 L932.3,553.8 L934.3,551.3 L936.4,554.9 L938.5,555.0 L940.6,556.4 L942.7,552.1 L944.8,557.4 L946.9,553.5 L949.0,551.3 L951.1,553.9 L953.2,558.2 L955.3,555.1 L957.4,556.3 L959.4,552.3 L961.5,547.3 L963.6,547.8 L965.7,553.4 L967.8,550.2 L969.9,552.7 L972.0,551.9 L974.1,556.0 L976.2,554.5 L978.3,552.9 L980.4,556.0 L982.5,558.7 L984.5,558.6 L986.6,559.7 L988.7,553.3 L990.8,555.5 L992.9,557.3 L995.0,558.4 L997.1,560.5 L999.2,558.9 L1001.3,554.6 L1003.4,550.3 L1005.5,551.2 L1007.6,555.6 L1009.6,553.3 L1011.7,556.7 L1013.8,554.7 L1015.9,547.4 L1018.0,551.1 L1020.1,550.5 L1022.2,551.5 L1024.3,550.2 L1026.4,553.4 L1028.5,555.1 L1030.6,551.7 L1032.7,556.0 L1034.7,550.9 L1036.8,552.9 L1038.9,553.4 L1041.0,553.7 L1043.1,556.1 L1045.2,556.3 L1047.3,555.8 L1049.4,554.8 L1051.5,554.5 L1053.6,551.6 L1055.7,549.5 L1057.8,547.7 L1059.8,548.7 L1061.9,554.3 L1064.0,553.5 L1066.1,545.4 L1068.2,529.4 L1070.3,555.2 L1072.4,561.3 L1074.5,555.6 L1076.6,559.0 L1078.7,558.7 L1080.8,556.0 L1082.9,556.5 L1084.9,558.1 L1087.0,551.5 L1089.1,553.6 L1091.2,554.6 L1093.3,556.3 L1095.4,551.8 L1097.5,559.0 L1099.6,556.9 L1101.7,552.6 L1103.8,550.8 L1105.9,552.9 L1108.0,552.3 L1110.0,552.3 L1112.1,553.9 L1114.2,557.7 L1116.3,559.7 L1118.4,555.6 L1120.5,559.3 L1122.6,554.7 L1124.7,552.8 L1126.8,552.3 L1128.9,558.0 L1131.0,559.3 L1133.1,559.6 L1135.1,559.1 L1137.2,557.4 L1139.3,555.0 L1141.4,557.3 L1143.5,560.6 L1145.6,557.2 L1147.7,556.1 L1149.8,551.8 L1151.9,552.3 L1154.0,552.2 L1156.1,555.6 L1158.2,552.2 L1160.2,553.2 L1162.3,553.4 L1164.4,551.6 L1166.5,548.4 L1168.6,551.7 L1170.7,554.3 L1172.8,553.7 L1174.9,554.8 L1177.0,560.2 L1179.1,553.9 L1181.2,553.5 L1183.3,554.9 L1185.3,550.2 L1187.4,553.5 L1189.5,553.8 L1191.6,549.6 L1193.7,550.7 L1195.8,554.1 L1197.9,557.1 L1200.0,549.0 L1202.1,556.9 L1204.2,552.0 L1206.3,556.8 L1208.4,556.5 L1210.4,558.5 L1212.5,555.2 L1214.6,552.6 L1216.7,549.1 L1218.8,557.2 L1220.9,555.4 L1223.0,559.7 L1225.0,526.8" fill="none" stroke="#7eb26d" stroke-width="1" stroke-linejoin="round"/>
<path d="M744.0,532.2 L746.1,547.7 L748.2,545.6 L750.3,541.0 L752.4,535.7 L754.5,537.4 L756.6,535.2 L758.6,538.2 L760.7,539.6 L762.8,538.3 L764.9,536.7 L767.0,539.0 L769.1,538.1 L771.2,542.2 L773.3,539.5 L775.4,536.3 L777.5,533.5 L779.6,533.4 L781.7,537.3 L783.7,538.5 L785.8,543.0 L787.9,537.9 L790.0,534.1 L792.1,535.4 L794.2,534.4 L796.3,536.5 L798.4,535.0 L800.5,533.9 L802.6,534.7 L804.7,530.8 L806.8,528.7 L808.8,536.5 L810.9,535.5 L813.0,538.3 L815.1,528.5 L817.2,513.8 L819.3,507.8 L821.4,511.9 L823.5,522.1 L825.6,528.9 L827.7,534.5 L829.8,532.7 L831.9,530.3 L833.9,537.4 L836.0,537.5 L838.1,535.9 L840.2,541.0 L842.3,546.4 L844.4,544.5 L846.5,541.9 L848.6,538.9 L850.7,537.6 L852.8,538.8 L854.9,542.6 L857.0,542.3 L859.0,548.4 L861.1,549.2 L863.2,547.5 L865.3,544.9 L867.4,536.0 L869.5,533.2 L871.6,531.6 L873.7,535.5 L875.8,544.0 L877.9,539.7 L880.0,538.4 L882.1,527.1 L884.1,535.5 L886.2,534.2 L888.3,543.9 L890.4,540.2 L892.5,536.2 L894.6,528.9 L896.7,520.3 L898.8,521.1 L900.9,530.2 L903.0,534.5 L905.1,531.5 L907.2,537.0 L909.2,540.2 L911.3,536.6 L913.4,544.3 L915.5,542.7 L917.6,529.6 L919.7,531.6 L921.8,534.7 L923.9,530.0 L926.0,536.3 L928.1,540.3 L930.2,537.7 L932.3,536.7 L934.3,536.8 L936.4,541.2 L938.5,537.4 L940.6,538.7 L942.7,532.5 L944.8,537.2 L946.9,538.5 L949.0,534.3 L951.1,535.9 L953.2,538.3 L955.3,535.3 L957.4,539.6 L959.4,538.0 L961.5,530.3 L963.6,533.0 L965.7,534.7 L967.8,531.8 L969.9,538.8 L972.0,537.3 L974.1,537.2 L976.2,532.8 L978.3,536.7 L980.4,538.1 L982.5,538.7 L984.5,545.8 L986.6,545.0 L988.7,536.4 L990.8,537.7 L992.9,538.2 L995.0,542.9 L997.1,543.3 L999.2,547.2 L1001.3,540.3 L1003.4,532.0 L1005.5,528.8 L1007.6,531.3 L1009.6,528.7 L1011.7,535.9 L1013.8,532.1 L1015.9,531.2 L1018.0,531.4 L1020.1,533.3 L1022.2,526.7 L1024.3,522.7 L1026.4,524.4 L1028.5,530.9 L1030.6,535.7 L1032.7,539.7 L1034.7,529.4 L1036.8,533.7 L1038.9,535.4 L1041.0,534.1 L1043.1,536.9 L1045.2,536.0 L1047.3,536.3 L1049.4,541.8 L1051.5,539.8 L1053.6,529.5 L1055.7,534.6 L1057.8,532.8 L1059.8,535.1 L1061.9,536.8 L1064.0,532.6 L1066.1,517.9 L1068.2,488.6 L1070.3,535.3 L1072.4,550.9 L1074.5,546.4 L1076.6,540.7 L1078.7,541.7 L1080.8,538.6 L1082.9,542.7 L1084.9,541.0 L1087.0,536.6 L1089.1,539.5 L1091.2,539.1 L1093.3,541.2 L1095.4,537.1 L1097.5,535.3 L1099.6,534.3 L1101.7,530.0 L1103.8,530.3 L1105.9,530.4 L1108.0,537.2 L1110.0,538.1 L1112.1,538.3 L1114.2,538.0 L1116.3,541.7 L1118.4,534.8 L1120.5,536.9 L1122.6,539.3 L1124.7,534.9 L1126.8,538.2 L1128.9,538.1 L1131.0,543.0 L1133.1,542.5 L1135.1,544.3 L1137.2,540.6 L1139.3,543.3 L1141.4,538.4 L1143.5,541.0 L1145.6,537.4 L1147.7,534.5 L1149.8,528.0 L1151.9,534.4 L1154.0,531.0 L1156.1,537.7 L1158.2,535.2 L1160.2,536.8 L1162.3,533.4 L1164.4,532.1 L1166.5,530.9 L1168.6,535.9 L1170.7,533.2 L1172.8,539.1 L1174.9,540.5 L1177.0,540.7 L1179.1,539.9 L1181.2,539.3 L1183.3,539.8 L1185.3,530.7 L1187.4,538.0 L1189.5,533.8 L1191.6,534.8 L1193.7,533.3 L1195.8,531.8 L1197.9,533.1 L1200.0,526.2 L1202.1,533.6 L1204.2,533.3 L1206.3,535.3 L1208.4,544.2 L1210.4,546.1 L1212.5,542.3 L1214.6,542.1 L1216.7,532.1 L1218.8,541.1 L1220.9,538.5 L1223.0,543.0 L1225.0,469.2" fill="none" stroke="#eab839" stroke-width="1" stroke-linejoin="round"/>
<line x1="206" y1="663.5" x2="688" y2="663.5" stroke="#ececec" stroke-width="1"/>
<line x1="206" y1="695.5" x2="688" y2="695.5" stroke="#ececec" stroke-width="1"/>
<line x1="206" y1="727.5" x2="688" y2="727.5" stroke="#ececec" stroke-width="1"/>
<line x1="216.4" y1="663.5" x2="216.4" y2="720" stroke="#ececec" stroke-width="1"/>
<line x1="297.6" y1="663.5" x2="297.6" y2="720" stroke="#ececec" stroke-width="1"/>
<line x1="378.8" y1="663.5" x2="378.8" y2="720" stroke="#ececec" stroke-width="1"/>
<line x1="460.0" y1="663.5" x2="460.0" y2="720" stroke="#ececec" stroke-width="1"/>
<line x1="541.2" y1="663.5" x2="541.2" y2="720" stroke="#ececec" stroke-width="1"/>
<line x1="622.4" y1="663.5" x2="622.4" y2="720" stroke="#ececec" stroke-width="1"/>
<text x="200.5" y="666" text-anchor="end" class="ax">40 µs</text>
<text x="200.5" y="698" text-anchor="end" class="ax">30 µs</text>
<path d="M207.0,730 L209.2,684 L211.4,730 Z" fill="rgba(126,178,109,0.18)" stroke="#7eb26d" stroke-width="1"/>
<path d="M225.6,730 L227.8,684 L230.0,730 Z" fill="rgba(126,178,109,0.18)" stroke="#7eb26d" stroke-width="1"/>
<path d="M234.0,730 L236.2,684 L238.4,730 Z" fill="rgba(126,178,109,0.18)" stroke="#7eb26d" stroke-width="1"/>
<path d="M239.5,730 L241.7,684 L243.9,730 Z" fill="rgba(126,178,109,0.18)" stroke="#7eb26d" stroke-width="1"/>
<path d="M245.0,730 L247.2,684 L249.4,730 Z" fill="rgba(126,178,109,0.18)" stroke="#7eb26d" stroke-width="1"/>
<path d="M250.9,730 L253.1,684 L255.3,730 Z" fill="rgba(126,178,109,0.18)" stroke="#7eb26d" stroke-width="1"/>
<path d="M256.0,730 L258.2,684 L260.4,730 Z" fill="rgba(126,178,109,0.18)" stroke="#7eb26d" stroke-width="1"/>
<path d="M264.8,730 L267.0,684 L269.2,730 Z" fill="rgba(126,178,109,0.18)" stroke="#7eb26d" stroke-width="1"/>
<path d="M272.9,730 L275.1,684 L277.3,730 Z" fill="rgba(126,178,109,0.18)" stroke="#7eb26d" stroke-width="1"/>
<path d="M338.7,730 L340.9,684 L343.1,730 Z" fill="rgba(126,178,109,0.18)" stroke="#7eb26d" stroke-width="1"/>
<path d="M340.8,730 L343.0,684 L345.2,730 Z" fill="rgba(126,178,109,0.18)" stroke="#7eb26d" stroke-width="1"/>
<path d="M357.3,730 L359.5,684 L361.7,730 Z" fill="rgba(126,178,109,0.18)" stroke="#7eb26d" stroke-width="1"/>
<path d="M364.0,730 L366.2,684 L368.4,730 Z" fill="rgba(126,178,109,0.18)" stroke="#7eb26d" stroke-width="1"/>
<path d="M372.9,730 L375.1,684 L377.3,730 Z" fill="rgba(126,178,109,0.18)" stroke="#7eb26d" stroke-width="1"/>
<path d="M393.5,730 L395.7,684 L397.9,730 Z" fill="rgba(126,178,109,0.18)" stroke="#7eb26d" stroke-width="1"/>
<path d="M399.4,730 L401.6,684 L403.8,730 Z" fill="rgba(126,178,109,0.18)" stroke="#7eb26d" stroke-width="1"/>
<path d="M424.8,730 L427.0,684 L429.2,730 Z" fill="rgba(126,178,109,0.18)" stroke="#7eb26d" stroke-width="1"/>
<path d="M445.0,730 L447.2,684 L449.4,730 Z" fill="rgba(126,178,109,0.18)" stroke="#7eb26d" stroke-width="1"/>
<path d="M453.9,730 L456.1,684 L458.3,730 Z" fill="rgba(126,178,109,0.18)" stroke="#7eb26d" stroke-width="1"/>
<path d="M468.2,730 L470.4,684 L472.6,730 Z" fill="rgba(126,178,109,0.18)" stroke="#7eb26d" stroke-width="1"/>
<path d="M474.1,730 L476.3,684 L478.5,730 Z" fill="rgba(126,178,109,0.18)" stroke="#7eb26d" stroke-width="1"/>
<path d="M479.6,730 L481.8,684 L484.0,730 Z" fill="rgba(126,178,109,0.18)" stroke="#7eb26d" stroke-width="1"/>
<path d="M499.0,730 L501.2,684 L503.4,730 Z" fill="rgba(126,178,109,0.18)" stroke="#7eb26d" stroke-width="1"/>
<path d="M507.0,730 L509.2,684 L511.4,730 Z" fill="rgba(126,178,109,0.18)" stroke="#7eb26d" stroke-width="1"/>
<path d="M521.0,730 L523.2,684 L525.4,730 Z" fill="rgba(126,178,109,0.18)" stroke="#7eb26d" stroke-width="1"/>
<path d="M533.2,730 L535.4,684 L537.6,730 Z" fill="rgba(126,178,109,0.18)" stroke="#7eb26d" stroke-width="1"/>
<path d="M540.0,730 L542.2,684 L544.4,730 Z" fill="rgba(126,178,109,0.18)" stroke="#7eb26d" stroke-width="1"/>
<path d="M545.0,730 L547.2,684 L549.4,730 Z" fill="rgba(126,178,109,0.18)" stroke="#7eb26d" stroke-width="1"/>
<path d="M550.1,730 L552.3,684 L554.5,730 Z" fill="rgba(126,178,109,0.18)" stroke="#7eb26d" stroke-width="1"/>
<path d="M555.1,730 L557.3,684 L559.5,730 Z" fill="rgba(126,178,109,0.18)" stroke="#7eb26d" stroke-width="1"/>
<path d="M581.3,730 L583.5,684 L585.7,730 Z" fill="rgba(126,178,109,0.18)" stroke="#7eb26d" stroke-width="1"/>
<path d="M588.5,730 L590.7,684 L592.9,730 Z" fill="rgba(126,178,109,0.18)" stroke="#7eb26d" stroke-width="1"/>
<path d="M594.8,730 L597.0,684 L599.2,730 Z" fill="rgba(126,178,109,0.18)" stroke="#7eb26d" stroke-width="1"/>
<path d="M604.5,730 L606.7,684 L608.9,730 Z" fill="rgba(126,178,109,0.18)" stroke="#7eb26d" stroke-width="1"/>
<path d="M609.2,730 L611.4,684 L613.6,730 Z" fill="rgba(126,178,109,0.18)" stroke="#7eb26d" stroke-width="1"/>
<path d="M618.4,730 L620.6,684 L622.8,730 Z" fill="rgba(126,178,109,0.18)" stroke="#7eb26d" stroke-width="1"/>
<path d="M626.4,730 L628.6,684 L630.8,730 Z" fill="rgba(126,178,109,0.18)" stroke="#7eb26d" stroke-width="1"/>
<path d="M637.0,730 L639.2,684 L641.4,730 Z" fill="rgba(126,178,109,0.18)" stroke="#7eb26d" stroke-width="1"/>
<path d="M653.0,730 L655.2,684 L657.4,730 Z" fill="rgba(126,178,109,0.18)" stroke="#7eb26d" stroke-width="1"/>
<path d="M658.5,730 L660.7,684 L662.9,730 Z" fill="rgba(126,178,109,0.18)" stroke="#7eb26d" stroke-width="1"/>
<path d="M664.8,730 L667.0,684 L669.2,730 Z" fill="rgba(126,178,109,0.18)" stroke="#7eb26d" stroke-width="1"/>
<path d="M673.7,730 L675.9,684 L678.1,730 Z" fill="rgba(126,178,109,0.18)" stroke="#7eb26d" stroke-width="1"/>
<path d="M685.1,730 L687.3,684 L689.5,730 Z" fill="rgba(126,178,109,0.18)" stroke="#7eb26d" stroke-width="1"/>
<path d="M245.4,730 L247.6,684 L249.8,730 Z" fill="rgba(234,184,57,0.2)" stroke="#eab839" stroke-width="1"/>
<path d="M283.0,730 L285.2,684 L287.4,730 Z" fill="rgba(234,184,57,0.2)" stroke="#eab839" stroke-width="1"/>
<path d="M308.3,730 L310.5,684 L312.7,730 Z" fill="rgba(234,184,57,0.2)" stroke="#eab839" stroke-width="1"/>
<path d="M315.1,730 L317.3,684 L319.5,730 Z" fill="rgba(234,184,57,0.2)" stroke="#eab839" stroke-width="1"/>
<path d="M323.5,730 L325.7,684 L327.9,730 Z" fill="rgba(234,184,57,0.2)" stroke="#eab839" stroke-width="1"/>
<path d="M384.3,730 L386.5,684 L388.7,730 Z" fill="rgba(234,184,57,0.2)" stroke="#eab839" stroke-width="1"/>
<path d="M438.3,730 L440.5,684 L442.7,730 Z" fill="rgba(234,184,57,0.2)" stroke="#eab839" stroke-width="1"/>
<path d="M512.9,730 L515.1,684 L517.3,730 Z" fill="rgba(234,184,57,0.2)" stroke="#eab839" stroke-width="1"/>
<path d="M575.4,730 L577.6,684 L579.8,730 Z" fill="rgba(234,184,57,0.2)" stroke="#eab839" stroke-width="1"/>
<path d="M615.5,730 L617.7,684 L619.9,730 Z" fill="rgba(234,184,57,0.2)" stroke="#eab839" stroke-width="1"/>
<path d="M622.7,730 L624.9,684 L627.1,730 Z" fill="rgba(234,184,57,0.2)" stroke="#eab839" stroke-width="1"/>
<path d="M641.2,730 L643.4,684 L645.6,730 Z" fill="rgba(234,184,57,0.2)" stroke="#eab839" stroke-width="1"/>
<line x1="750" y1="663.5" x2="1225" y2="663.5" stroke="#ececec" stroke-width="1"/>
<line x1="750" y1="695.5" x2="1225" y2="695.5" stroke="#ececec" stroke-width="1"/>
<line x1="750" y1="727.5" x2="1225" y2="727.5" stroke="#ececec" stroke-width="1"/>
<line x1="762.0" y1="663.5" x2="762.0" y2="720" stroke="#ececec" stroke-width="1"/>
<line x1="841.6" y1="663.5" x2="841.6" y2="720" stroke="#ececec" stroke-width="1"/>
<line x1="921.2" y1="663.5" x2="921.2" y2="720" stroke="#ececec" stroke-width="1"/>
<line x1="1000.8" y1="663.5" x2="1000.8" y2="720" stroke="#ececec" stroke-width="1"/>
<line x1="1080.4" y1="663.5" x2="1080.4" y2="720" stroke="#ececec" stroke-width="1"/>
<line x1="1160.0" y1="663.5" x2="1160.0" y2="720" stroke="#ececec" stroke-width="1"/>
<text x="745.5" y="666" text-anchor="end" class="ax">381 MiB</text>
<text x="745.5" y="698" text-anchor="end" class="ax">286 MiB</text>
<line x1="1224.5" y1="669" x2="1224.5" y2="720" stroke="#7eb26d" stroke-width="1"/>
</svg>

<div class="leg" style="left:188.5px;top:386.5px"><i style="background:#7eb26d"></i>processes-Web:ps_cputime:syst</div>
<div class="leg" style="left:313px;top:386.5px"><i style="background:#eab839"></i>processes-Web:ps_cputime:user</div>
<div class="leg" style="left:724.5px;top:386.5px"><i style="background:#7eb26d"></i>processes-WebProxy:ps_cputime:syst</div>
<div class="leg" style="left:867px;top:386.5px"><i style="background:#eab839"></i>processes-WebProxy:ps_cputime:user</div>
<div class="leg" style="left:188.5px;top:599.5px"><i style="background:#7eb26d"></i>processes-Mail:ps_cputime:syst</div>
<div class="leg" style="left:313px;top:599.5px"><i style="background:#eab839"></i>processes-Mail:ps_cputime:user</div>
<div class="leg" style="left:724.5px;top:599.5px"><i style="background:#7eb26d"></i>processes-MySql:ps_cputime:syst</div>
<div class="leg" style="left:855px;top:599.5px"><i style="background:#eab839"></i>processes-MySql:ps_cputime:user</div>

<div class="a" id="scroll"></div>
<div class="a" id="thumb"></div>
<svg class="a" style="left:1271px;top:3px" width="7" height="6" viewBox="0 0 7 6" fill="none" stroke="#505050" stroke-width="1.4"><path d="M0.8 4.5 L3.5 1.8 L6.2 4.5"/></svg>
<svg class="a" style="left:1271px;top:711px" width="7" height="6" viewBox="0 0 7 6" fill="none" stroke="#505050" stroke-width="1.4"><path d="M0.8 1.5 L3.5 4.2 L6.2 1.5"/></svg>
</body></html>
